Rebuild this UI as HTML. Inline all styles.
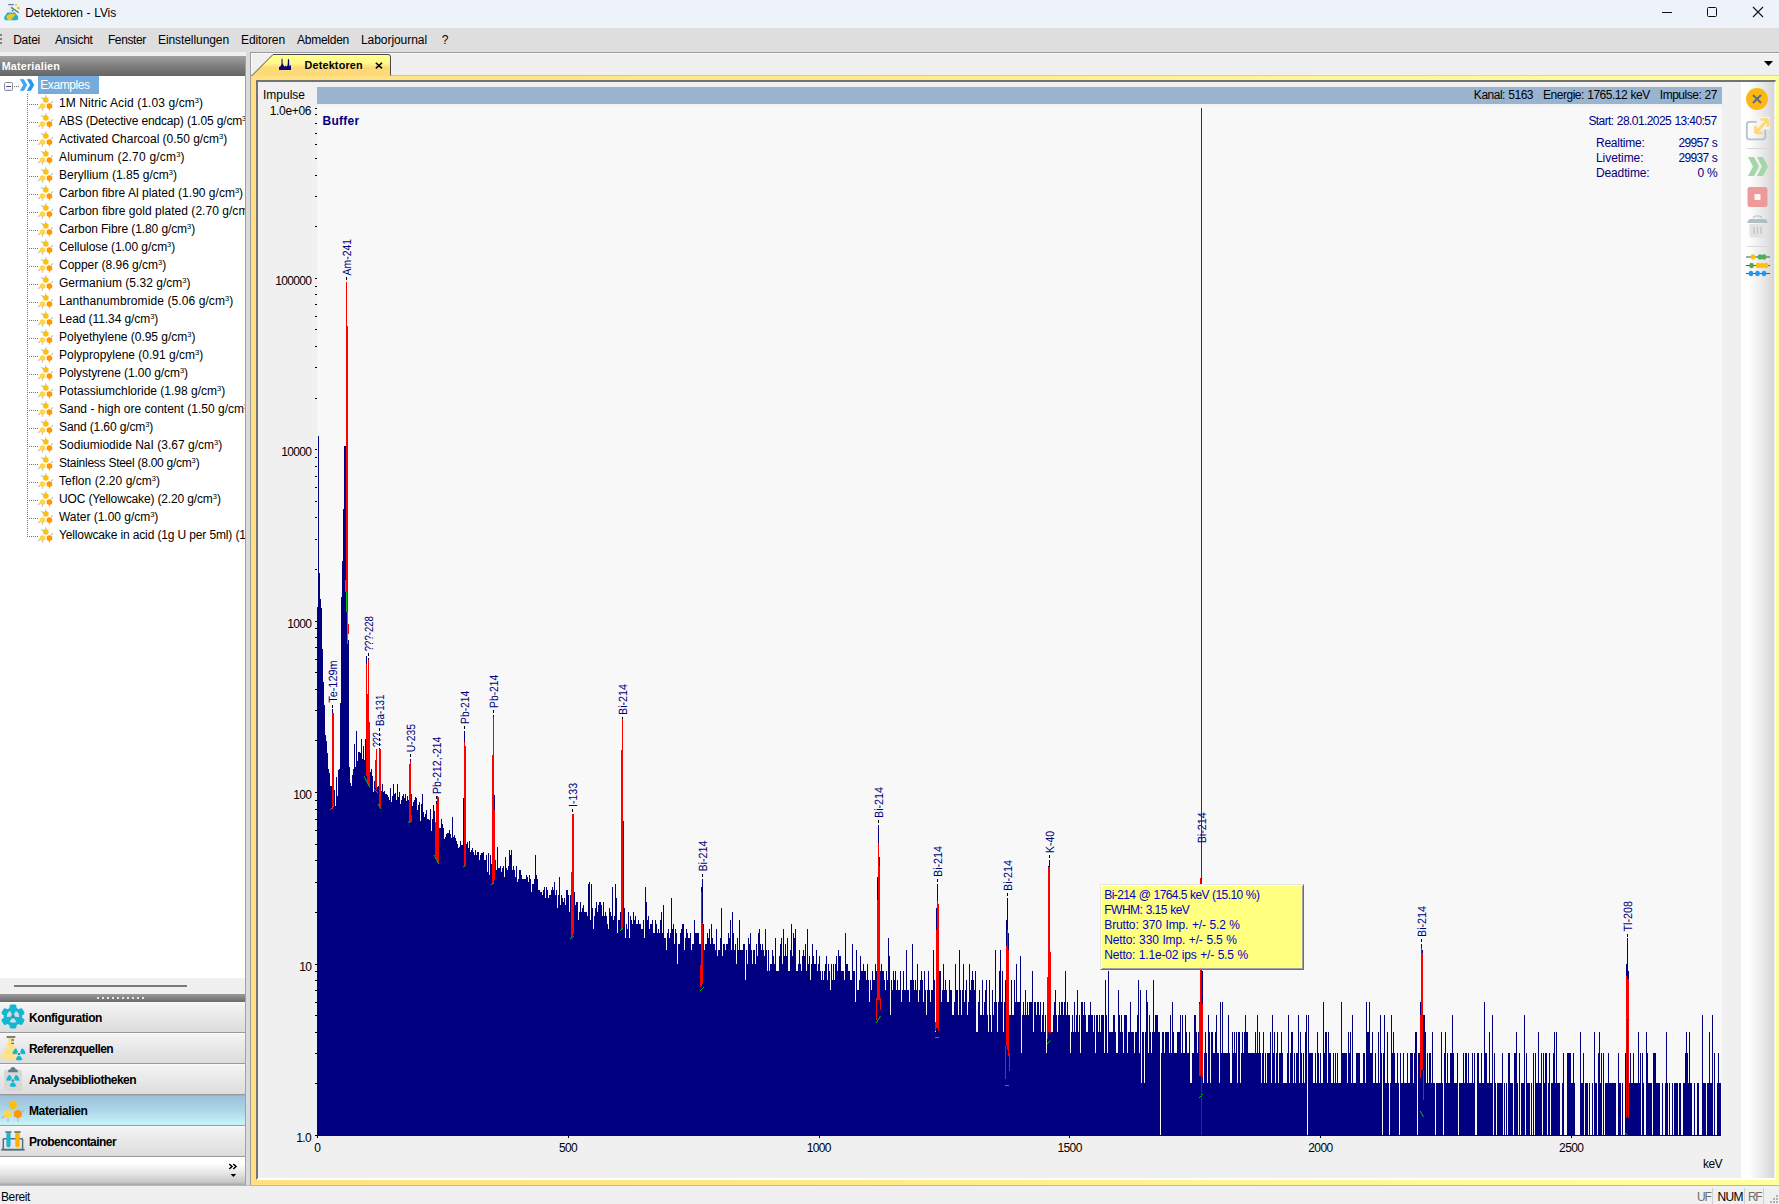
<!DOCTYPE html>
<html lang="de"><head><meta charset="utf-8"><title>Detektoren - LVis</title>
<style>
html,body{margin:0;padding:0;}
body{width:1779px;height:1204px;overflow:hidden;position:relative;background:#f0f0f0;
font-family:"Liberation Sans",sans-serif;font-size:12px;color:#000;}
div{box-sizing:border-box;}
svg{position:absolute;overflow:visible;}
.nav{position:absolute;left:0;width:245px;height:31px;border-top:1px solid #fafafa;border-bottom:1px solid #9a9a9a;
background:linear-gradient(#f4f4f4,#e9e9e9 45%,#dcdcdc);}
</style></head><body>
<div style="position:absolute;left:0px;top:0px;width:1779px;height:28px;background:#eef3fa;"></div><svg style="left:4px;top:4px" width="16" height="16" viewBox="0 0 16 16">
<path d="M5 1.200 H9.300 V6.500 L14 12.500 Q15 16 12 16.200 H2.500 Q-.8 16 .5 12.500 L5 6.500 Z" fill="#e4e9ee"/>
<path d="M3.300 8.500 L11 8.500 L14 12.500 Q15 16 12 16.200 H2.500 Q-.8 16 .5 12.500 Z" fill="#1ab6d4"/>
<path d="M5 10.300 L8 9.800 L11.800 10.400 L6.800 16 L4.200 16 Q1.600 14 3 11.500 Z" fill="#ffc20e"/>
<path d="M4.200 .6 H9.800" stroke="#5b7685" stroke-width="1.100"/>
<path d="M7.200 3.400 L14.800 8.700" stroke="#5b7685" stroke-width="1.300"/>
<path d="M8 6 L9.200 7.400" stroke="#5b7685" stroke-width="1.200"/>
<circle cx="12" cy="1.100" r="1" fill="#ffc20e"/><circle cx="14.400" cy="3.900" r="1.500" fill="#ffc20e"/>
</svg><div style="position:absolute;left:25.3px;top:5.0px;line-height:16px;font-size:12px;color:#000;white-space:pre;letter-spacing:-0.110px;word-spacing:0.50px;">Detektoren - LVis</div><svg style="left:1640px;top:0" width="139" height="30" viewBox="0 0 139 30">
<path d="M22 12.5 H32" stroke="#111" stroke-width="1"/>
<rect x="67.5" y="7.5" width="9" height="9" rx="1" fill="none" stroke="#111" stroke-width="1"/>
<path d="M113 7 L123 17 M123 7 L113 17" stroke="#111" stroke-width="1.1"/>
</svg><div style="position:absolute;left:0px;top:28px;width:1779px;height:24px;background:#dedede;"></div><div style="position:absolute;left:0px;top:52px;width:246px;height:4px;background:#f0f0f0;"></div><div style="position:absolute;left:0px;top:34px;width:2px;height:2px;background:#808080;"></div><div style="position:absolute;left:0px;top:38px;width:2px;height:2px;background:#808080;"></div><div style="position:absolute;left:0px;top:42px;width:2px;height:2px;background:#808080;"></div><div style="position:absolute;left:13.2px;top:32.2px;line-height:16px;font-size:12px;color:#000;white-space:pre;letter-spacing:-0.243px;">Datei</div><div style="position:absolute;left:55.1px;top:32.2px;line-height:16px;font-size:12px;color:#000;white-space:pre;letter-spacing:-0.249px;">Ansicht</div><div style="position:absolute;left:107.9px;top:32.2px;line-height:16px;font-size:12px;color:#000;white-space:pre;letter-spacing:-0.367px;">Fenster</div><div style="position:absolute;left:158.0px;top:32.2px;line-height:16px;font-size:12px;color:#000;white-space:pre;letter-spacing:-0.081px;">Einstellungen</div><div style="position:absolute;left:241.0px;top:32.2px;line-height:16px;font-size:12px;color:#000;white-space:pre;letter-spacing:-0.086px;">Editoren</div><div style="position:absolute;left:297.0px;top:32.2px;line-height:16px;font-size:12px;color:#000;white-space:pre;letter-spacing:-0.254px;">Abmelden</div><div style="position:absolute;left:361.0px;top:32.2px;line-height:16px;font-size:12px;color:#000;white-space:pre;letter-spacing:-0.060px;">Laborjournal</div><div style="position:absolute;left:441.8px;top:32.2px;line-height:16px;font-size:12px;color:#000;white-space:pre;">?</div><div style="position:absolute;left:0px;top:56px;width:245px;height:20px;background:linear-gradient(#a2a2a2,#7e7e7e 50%,#666);"></div><div style="position:absolute;left:1.7px;top:58.1px;line-height:16px;font-size:10.8px;font-weight:bold;color:#fff;white-space:pre;letter-spacing:0.174px;">Materialien</div><div style="position:absolute;left:0px;top:76px;width:245px;height:902px;background:#fff;"></div><div style="position:absolute;left:245px;top:56px;width:1px;height:1129px;background:#a0a0a0;"></div><div style="position:absolute;left:246px;top:52px;width:4px;height:1133px;background:#dcdcdc;"></div><div style="position:absolute;left:4px;top:82px;width:9px;height:9px;border:1px solid #8e8e8e;border-radius:1.5px;background:linear-gradient(#fff 55%,#e4e4e4);"></div><div style="position:absolute;left:6px;top:86px;width:5px;height:1px;background:#3f4fb0;"></div><svg style="left:0;top:0" width="245" height="560"><path d="M14 86.5 H19" stroke="#707070" stroke-width="1" stroke-dasharray="1 1"/><path d="M27.5 94 V537" stroke="#707070" stroke-width="1" stroke-dasharray="1 1"/><path d="M29 104.5 H38" stroke="#707070" stroke-width="1" stroke-dasharray="1 1"/><g transform="translate(38 95)"><path d="M7.8 .3V2.500M3.200 2.200L5.200 4M13 8L15 6.300M2.200 12.200L.2 13.800M4.500 13.800V15.800M11.400 13.800V15.800" stroke="#b4c0c8" stroke-width="1.1"/><path d="M7.80 1.70L10.57 3.30L10.57 6.50L7.80 8.10L5.03 6.50L5.03 3.30z" fill="#ffc107"/><path d="M4.50 7.90L7.27 9.50L7.27 12.70L4.50 14.30L1.73 12.70L1.73 9.50z" fill="#ffd54f"/><path d="M11.40 7.90L14.17 9.50L14.17 12.70L11.40 14.30L8.63 12.70L8.63 9.50z" fill="#ff9800"/></g><path d="M29 122.5 H38" stroke="#707070" stroke-width="1" stroke-dasharray="1 1"/><g transform="translate(38 113)"><path d="M7.8 .3V2.500M3.200 2.200L5.200 4M13 8L15 6.300M2.200 12.200L.2 13.800M4.500 13.800V15.800M11.400 13.800V15.800" stroke="#b4c0c8" stroke-width="1.1"/><path d="M7.80 1.70L10.57 3.30L10.57 6.50L7.80 8.10L5.03 6.50L5.03 3.30z" fill="#ffc107"/><path d="M4.50 7.90L7.27 9.50L7.27 12.70L4.50 14.30L1.73 12.70L1.73 9.50z" fill="#ffd54f"/><path d="M11.40 7.90L14.17 9.50L14.17 12.70L11.40 14.30L8.63 12.70L8.63 9.50z" fill="#ff9800"/></g><path d="M29 140.5 H38" stroke="#707070" stroke-width="1" stroke-dasharray="1 1"/><g transform="translate(38 131)"><path d="M7.8 .3V2.500M3.200 2.200L5.200 4M13 8L15 6.300M2.200 12.200L.2 13.800M4.500 13.800V15.800M11.400 13.800V15.800" stroke="#b4c0c8" stroke-width="1.1"/><path d="M7.80 1.70L10.57 3.30L10.57 6.50L7.80 8.10L5.03 6.50L5.03 3.30z" fill="#ffc107"/><path d="M4.50 7.90L7.27 9.50L7.27 12.70L4.50 14.30L1.73 12.70L1.73 9.50z" fill="#ffd54f"/><path d="M11.40 7.90L14.17 9.50L14.17 12.70L11.40 14.30L8.63 12.70L8.63 9.50z" fill="#ff9800"/></g><path d="M29 158.5 H38" stroke="#707070" stroke-width="1" stroke-dasharray="1 1"/><g transform="translate(38 149)"><path d="M7.8 .3V2.500M3.200 2.200L5.200 4M13 8L15 6.300M2.200 12.200L.2 13.800M4.500 13.800V15.800M11.400 13.800V15.800" stroke="#b4c0c8" stroke-width="1.1"/><path d="M7.80 1.70L10.57 3.30L10.57 6.50L7.80 8.10L5.03 6.50L5.03 3.30z" fill="#ffc107"/><path d="M4.50 7.90L7.27 9.50L7.27 12.70L4.50 14.30L1.73 12.70L1.73 9.50z" fill="#ffd54f"/><path d="M11.40 7.90L14.17 9.50L14.17 12.70L11.40 14.30L8.63 12.70L8.63 9.50z" fill="#ff9800"/></g><path d="M29 176.5 H38" stroke="#707070" stroke-width="1" stroke-dasharray="1 1"/><g transform="translate(38 167)"><path d="M7.8 .3V2.500M3.200 2.200L5.200 4M13 8L15 6.300M2.200 12.200L.2 13.800M4.500 13.800V15.800M11.400 13.800V15.800" stroke="#b4c0c8" stroke-width="1.1"/><path d="M7.80 1.70L10.57 3.30L10.57 6.50L7.80 8.10L5.03 6.50L5.03 3.30z" fill="#ffc107"/><path d="M4.50 7.90L7.27 9.50L7.27 12.70L4.50 14.30L1.73 12.70L1.73 9.50z" fill="#ffd54f"/><path d="M11.40 7.90L14.17 9.50L14.17 12.70L11.40 14.30L8.63 12.70L8.63 9.50z" fill="#ff9800"/></g><path d="M29 194.5 H38" stroke="#707070" stroke-width="1" stroke-dasharray="1 1"/><g transform="translate(38 185)"><path d="M7.8 .3V2.500M3.200 2.200L5.200 4M13 8L15 6.300M2.200 12.200L.2 13.800M4.500 13.800V15.800M11.400 13.800V15.800" stroke="#b4c0c8" stroke-width="1.1"/><path d="M7.80 1.70L10.57 3.30L10.57 6.50L7.80 8.10L5.03 6.50L5.03 3.30z" fill="#ffc107"/><path d="M4.50 7.90L7.27 9.50L7.27 12.70L4.50 14.30L1.73 12.70L1.73 9.50z" fill="#ffd54f"/><path d="M11.40 7.90L14.17 9.50L14.17 12.70L11.40 14.30L8.63 12.70L8.63 9.50z" fill="#ff9800"/></g><path d="M29 212.5 H38" stroke="#707070" stroke-width="1" stroke-dasharray="1 1"/><g transform="translate(38 203)"><path d="M7.8 .3V2.500M3.200 2.200L5.200 4M13 8L15 6.300M2.200 12.200L.2 13.800M4.500 13.800V15.800M11.400 13.800V15.800" stroke="#b4c0c8" stroke-width="1.1"/><path d="M7.80 1.70L10.57 3.30L10.57 6.50L7.80 8.10L5.03 6.50L5.03 3.30z" fill="#ffc107"/><path d="M4.50 7.90L7.27 9.50L7.27 12.70L4.50 14.30L1.73 12.70L1.73 9.50z" fill="#ffd54f"/><path d="M11.40 7.90L14.17 9.50L14.17 12.70L11.40 14.30L8.63 12.70L8.63 9.50z" fill="#ff9800"/></g><path d="M29 230.5 H38" stroke="#707070" stroke-width="1" stroke-dasharray="1 1"/><g transform="translate(38 221)"><path d="M7.8 .3V2.500M3.200 2.200L5.200 4M13 8L15 6.300M2.200 12.200L.2 13.800M4.500 13.800V15.800M11.400 13.800V15.800" stroke="#b4c0c8" stroke-width="1.1"/><path d="M7.80 1.70L10.57 3.30L10.57 6.50L7.80 8.10L5.03 6.50L5.03 3.30z" fill="#ffc107"/><path d="M4.50 7.90L7.27 9.50L7.27 12.70L4.50 14.30L1.73 12.70L1.73 9.50z" fill="#ffd54f"/><path d="M11.40 7.90L14.17 9.50L14.17 12.70L11.40 14.30L8.63 12.70L8.63 9.50z" fill="#ff9800"/></g><path d="M29 248.5 H38" stroke="#707070" stroke-width="1" stroke-dasharray="1 1"/><g transform="translate(38 239)"><path d="M7.8 .3V2.500M3.200 2.200L5.200 4M13 8L15 6.300M2.200 12.200L.2 13.800M4.500 13.800V15.800M11.400 13.800V15.800" stroke="#b4c0c8" stroke-width="1.1"/><path d="M7.80 1.70L10.57 3.30L10.57 6.50L7.80 8.10L5.03 6.50L5.03 3.30z" fill="#ffc107"/><path d="M4.50 7.90L7.27 9.50L7.27 12.70L4.50 14.30L1.73 12.70L1.73 9.50z" fill="#ffd54f"/><path d="M11.40 7.90L14.17 9.50L14.17 12.70L11.40 14.30L8.63 12.70L8.63 9.50z" fill="#ff9800"/></g><path d="M29 266.5 H38" stroke="#707070" stroke-width="1" stroke-dasharray="1 1"/><g transform="translate(38 257)"><path d="M7.8 .3V2.500M3.200 2.200L5.200 4M13 8L15 6.300M2.200 12.200L.2 13.800M4.500 13.800V15.800M11.400 13.800V15.800" stroke="#b4c0c8" stroke-width="1.1"/><path d="M7.80 1.70L10.57 3.30L10.57 6.50L7.80 8.10L5.03 6.50L5.03 3.30z" fill="#ffc107"/><path d="M4.50 7.90L7.27 9.50L7.27 12.70L4.50 14.30L1.73 12.70L1.73 9.50z" fill="#ffd54f"/><path d="M11.40 7.90L14.17 9.50L14.17 12.70L11.40 14.30L8.63 12.70L8.63 9.50z" fill="#ff9800"/></g><path d="M29 284.5 H38" stroke="#707070" stroke-width="1" stroke-dasharray="1 1"/><g transform="translate(38 275)"><path d="M7.8 .3V2.500M3.200 2.200L5.200 4M13 8L15 6.300M2.200 12.200L.2 13.800M4.500 13.800V15.800M11.400 13.800V15.800" stroke="#b4c0c8" stroke-width="1.1"/><path d="M7.80 1.70L10.57 3.30L10.57 6.50L7.80 8.10L5.03 6.50L5.03 3.30z" fill="#ffc107"/><path d="M4.50 7.90L7.27 9.50L7.27 12.70L4.50 14.30L1.73 12.70L1.73 9.50z" fill="#ffd54f"/><path d="M11.40 7.90L14.17 9.50L14.17 12.70L11.40 14.30L8.63 12.70L8.63 9.50z" fill="#ff9800"/></g><path d="M29 302.5 H38" stroke="#707070" stroke-width="1" stroke-dasharray="1 1"/><g transform="translate(38 293)"><path d="M7.8 .3V2.500M3.200 2.200L5.200 4M13 8L15 6.300M2.200 12.200L.2 13.800M4.500 13.800V15.800M11.400 13.800V15.800" stroke="#b4c0c8" stroke-width="1.1"/><path d="M7.80 1.70L10.57 3.30L10.57 6.50L7.80 8.10L5.03 6.50L5.03 3.30z" fill="#ffc107"/><path d="M4.50 7.90L7.27 9.50L7.27 12.70L4.50 14.30L1.73 12.70L1.73 9.50z" fill="#ffd54f"/><path d="M11.40 7.90L14.17 9.50L14.17 12.70L11.40 14.30L8.63 12.70L8.63 9.50z" fill="#ff9800"/></g><path d="M29 320.5 H38" stroke="#707070" stroke-width="1" stroke-dasharray="1 1"/><g transform="translate(38 311)"><path d="M7.8 .3V2.500M3.200 2.200L5.200 4M13 8L15 6.300M2.200 12.200L.2 13.800M4.500 13.800V15.800M11.400 13.800V15.800" stroke="#b4c0c8" stroke-width="1.1"/><path d="M7.80 1.70L10.57 3.30L10.57 6.50L7.80 8.10L5.03 6.50L5.03 3.30z" fill="#ffc107"/><path d="M4.50 7.90L7.27 9.50L7.27 12.70L4.50 14.30L1.73 12.70L1.73 9.50z" fill="#ffd54f"/><path d="M11.40 7.90L14.17 9.50L14.17 12.70L11.40 14.30L8.63 12.70L8.63 9.50z" fill="#ff9800"/></g><path d="M29 338.5 H38" stroke="#707070" stroke-width="1" stroke-dasharray="1 1"/><g transform="translate(38 329)"><path d="M7.8 .3V2.500M3.200 2.200L5.200 4M13 8L15 6.300M2.200 12.200L.2 13.800M4.500 13.800V15.800M11.400 13.800V15.800" stroke="#b4c0c8" stroke-width="1.1"/><path d="M7.80 1.70L10.57 3.30L10.57 6.50L7.80 8.10L5.03 6.50L5.03 3.30z" fill="#ffc107"/><path d="M4.50 7.90L7.27 9.50L7.27 12.70L4.50 14.30L1.73 12.70L1.73 9.50z" fill="#ffd54f"/><path d="M11.40 7.90L14.17 9.50L14.17 12.70L11.40 14.30L8.63 12.70L8.63 9.50z" fill="#ff9800"/></g><path d="M29 356.5 H38" stroke="#707070" stroke-width="1" stroke-dasharray="1 1"/><g transform="translate(38 347)"><path d="M7.8 .3V2.500M3.200 2.200L5.200 4M13 8L15 6.300M2.200 12.200L.2 13.800M4.500 13.800V15.800M11.400 13.800V15.800" stroke="#b4c0c8" stroke-width="1.1"/><path d="M7.80 1.70L10.57 3.30L10.57 6.50L7.80 8.10L5.03 6.50L5.03 3.30z" fill="#ffc107"/><path d="M4.50 7.90L7.27 9.50L7.27 12.70L4.50 14.30L1.73 12.70L1.73 9.50z" fill="#ffd54f"/><path d="M11.40 7.90L14.17 9.50L14.17 12.70L11.40 14.30L8.63 12.70L8.63 9.50z" fill="#ff9800"/></g><path d="M29 374.5 H38" stroke="#707070" stroke-width="1" stroke-dasharray="1 1"/><g transform="translate(38 365)"><path d="M7.8 .3V2.500M3.200 2.200L5.200 4M13 8L15 6.300M2.200 12.200L.2 13.800M4.500 13.800V15.800M11.400 13.800V15.800" stroke="#b4c0c8" stroke-width="1.1"/><path d="M7.80 1.70L10.57 3.30L10.57 6.50L7.80 8.10L5.03 6.50L5.03 3.30z" fill="#ffc107"/><path d="M4.50 7.90L7.27 9.50L7.27 12.70L4.50 14.30L1.73 12.70L1.73 9.50z" fill="#ffd54f"/><path d="M11.40 7.90L14.17 9.50L14.17 12.70L11.40 14.30L8.63 12.70L8.63 9.50z" fill="#ff9800"/></g><path d="M29 392.5 H38" stroke="#707070" stroke-width="1" stroke-dasharray="1 1"/><g transform="translate(38 383)"><path d="M7.8 .3V2.500M3.200 2.200L5.200 4M13 8L15 6.300M2.200 12.200L.2 13.800M4.500 13.800V15.800M11.400 13.800V15.800" stroke="#b4c0c8" stroke-width="1.1"/><path d="M7.80 1.70L10.57 3.30L10.57 6.50L7.80 8.10L5.03 6.50L5.03 3.30z" fill="#ffc107"/><path d="M4.50 7.90L7.27 9.50L7.27 12.70L4.50 14.30L1.73 12.70L1.73 9.50z" fill="#ffd54f"/><path d="M11.40 7.90L14.17 9.50L14.17 12.70L11.40 14.30L8.63 12.70L8.63 9.50z" fill="#ff9800"/></g><path d="M29 410.5 H38" stroke="#707070" stroke-width="1" stroke-dasharray="1 1"/><g transform="translate(38 401)"><path d="M7.8 .3V2.500M3.200 2.200L5.200 4M13 8L15 6.300M2.200 12.200L.2 13.800M4.500 13.800V15.800M11.400 13.800V15.800" stroke="#b4c0c8" stroke-width="1.1"/><path d="M7.80 1.70L10.57 3.30L10.57 6.50L7.80 8.10L5.03 6.50L5.03 3.30z" fill="#ffc107"/><path d="M4.50 7.90L7.27 9.50L7.27 12.70L4.50 14.30L1.73 12.70L1.73 9.50z" fill="#ffd54f"/><path d="M11.40 7.90L14.17 9.50L14.17 12.70L11.40 14.30L8.63 12.70L8.63 9.50z" fill="#ff9800"/></g><path d="M29 428.5 H38" stroke="#707070" stroke-width="1" stroke-dasharray="1 1"/><g transform="translate(38 419)"><path d="M7.8 .3V2.500M3.200 2.200L5.200 4M13 8L15 6.300M2.200 12.200L.2 13.800M4.500 13.800V15.800M11.400 13.800V15.800" stroke="#b4c0c8" stroke-width="1.1"/><path d="M7.80 1.70L10.57 3.30L10.57 6.50L7.80 8.10L5.03 6.50L5.03 3.30z" fill="#ffc107"/><path d="M4.50 7.90L7.27 9.50L7.27 12.70L4.50 14.30L1.73 12.70L1.73 9.50z" fill="#ffd54f"/><path d="M11.40 7.90L14.17 9.50L14.17 12.70L11.40 14.30L8.63 12.70L8.63 9.50z" fill="#ff9800"/></g><path d="M29 446.5 H38" stroke="#707070" stroke-width="1" stroke-dasharray="1 1"/><g transform="translate(38 437)"><path d="M7.8 .3V2.500M3.200 2.200L5.200 4M13 8L15 6.300M2.200 12.200L.2 13.800M4.500 13.800V15.800M11.400 13.800V15.800" stroke="#b4c0c8" stroke-width="1.1"/><path d="M7.80 1.70L10.57 3.30L10.57 6.50L7.80 8.10L5.03 6.50L5.03 3.30z" fill="#ffc107"/><path d="M4.50 7.90L7.27 9.50L7.27 12.70L4.50 14.30L1.73 12.70L1.73 9.50z" fill="#ffd54f"/><path d="M11.40 7.90L14.17 9.50L14.17 12.70L11.40 14.30L8.63 12.70L8.63 9.50z" fill="#ff9800"/></g><path d="M29 464.5 H38" stroke="#707070" stroke-width="1" stroke-dasharray="1 1"/><g transform="translate(38 455)"><path d="M7.8 .3V2.500M3.200 2.200L5.200 4M13 8L15 6.300M2.200 12.200L.2 13.800M4.500 13.800V15.800M11.400 13.800V15.800" stroke="#b4c0c8" stroke-width="1.1"/><path d="M7.80 1.70L10.57 3.30L10.57 6.50L7.80 8.10L5.03 6.50L5.03 3.30z" fill="#ffc107"/><path d="M4.50 7.90L7.27 9.50L7.27 12.70L4.50 14.30L1.73 12.70L1.73 9.50z" fill="#ffd54f"/><path d="M11.40 7.90L14.17 9.50L14.17 12.70L11.40 14.30L8.63 12.70L8.63 9.50z" fill="#ff9800"/></g><path d="M29 482.5 H38" stroke="#707070" stroke-width="1" stroke-dasharray="1 1"/><g transform="translate(38 473)"><path d="M7.8 .3V2.500M3.200 2.200L5.200 4M13 8L15 6.300M2.200 12.200L.2 13.800M4.500 13.800V15.800M11.400 13.800V15.800" stroke="#b4c0c8" stroke-width="1.1"/><path d="M7.80 1.70L10.57 3.30L10.57 6.50L7.80 8.10L5.03 6.50L5.03 3.30z" fill="#ffc107"/><path d="M4.50 7.90L7.27 9.50L7.27 12.70L4.50 14.30L1.73 12.70L1.73 9.50z" fill="#ffd54f"/><path d="M11.40 7.90L14.17 9.50L14.17 12.70L11.40 14.30L8.63 12.70L8.63 9.50z" fill="#ff9800"/></g><path d="M29 500.5 H38" stroke="#707070" stroke-width="1" stroke-dasharray="1 1"/><g transform="translate(38 491)"><path d="M7.8 .3V2.500M3.200 2.200L5.200 4M13 8L15 6.300M2.200 12.200L.2 13.800M4.500 13.800V15.800M11.400 13.800V15.800" stroke="#b4c0c8" stroke-width="1.1"/><path d="M7.80 1.70L10.57 3.30L10.57 6.50L7.80 8.10L5.03 6.50L5.03 3.30z" fill="#ffc107"/><path d="M4.50 7.90L7.27 9.50L7.27 12.70L4.50 14.30L1.73 12.70L1.73 9.50z" fill="#ffd54f"/><path d="M11.40 7.90L14.17 9.50L14.17 12.70L11.40 14.30L8.63 12.70L8.63 9.50z" fill="#ff9800"/></g><path d="M29 518.5 H38" stroke="#707070" stroke-width="1" stroke-dasharray="1 1"/><g transform="translate(38 509)"><path d="M7.8 .3V2.500M3.200 2.200L5.200 4M13 8L15 6.300M2.200 12.200L.2 13.800M4.500 13.800V15.800M11.400 13.800V15.800" stroke="#b4c0c8" stroke-width="1.1"/><path d="M7.80 1.70L10.57 3.30L10.57 6.50L7.80 8.10L5.03 6.50L5.03 3.30z" fill="#ffc107"/><path d="M4.50 7.90L7.27 9.50L7.27 12.70L4.50 14.30L1.73 12.70L1.73 9.50z" fill="#ffd54f"/><path d="M11.40 7.90L14.17 9.50L14.17 12.70L11.40 14.30L8.63 12.70L8.63 9.50z" fill="#ff9800"/></g><path d="M29 536.5 H38" stroke="#707070" stroke-width="1" stroke-dasharray="1 1"/><g transform="translate(38 527)"><path d="M7.8 .3V2.500M3.200 2.200L5.200 4M13 8L15 6.300M2.200 12.200L.2 13.800M4.500 13.800V15.800M11.400 13.800V15.800" stroke="#b4c0c8" stroke-width="1.1"/><path d="M7.80 1.70L10.57 3.30L10.57 6.50L7.80 8.10L5.03 6.50L5.03 3.30z" fill="#ffc107"/><path d="M4.50 7.90L7.27 9.50L7.27 12.70L4.50 14.30L1.73 12.70L1.73 9.50z" fill="#ffd54f"/><path d="M11.40 7.90L14.17 9.50L14.17 12.70L11.40 14.30L8.63 12.70L8.63 9.50z" fill="#ff9800"/></g></svg><div style="position:absolute;left:0;top:76px;width:245px;height:902px;overflow:hidden;"><div style="position:absolute;left:59px;top:19px;line-height:16px;white-space:pre;letter-spacing:0.098px;">1M Nitric Acid (1.03 g/cm<span style="font-size:7.5px;position:relative;top:-4.5px;letter-spacing:0;">3</span>)</div><div style="position:absolute;left:59px;top:37px;line-height:16px;white-space:pre;letter-spacing:-0.152px;">ABS (Detective endcap) (1.05 g/cm<span style="font-size:7.5px;position:relative;top:-4.5px;letter-spacing:0;">3</span>)</div><div style="position:absolute;left:59px;top:55px;line-height:16px;white-space:pre;letter-spacing:-0.024px;">Activated Charcoal (0.50 g/cm<span style="font-size:7.5px;position:relative;top:-4.5px;letter-spacing:0;">3</span>)</div><div style="position:absolute;left:59px;top:73px;line-height:16px;white-space:pre;letter-spacing:0.202px;">Aluminum (2.70 g/cm<span style="font-size:7.5px;position:relative;top:-4.5px;letter-spacing:0;">3</span>)</div><div style="position:absolute;left:59px;top:91px;line-height:16px;white-space:pre;letter-spacing:0.022px;">Beryllium (1.85 g/cm<span style="font-size:7.5px;position:relative;top:-4.5px;letter-spacing:0;">3</span>)</div><div style="position:absolute;left:59px;top:109px;line-height:16px;white-space:pre;letter-spacing:0.015px;">Carbon fibre Al plated (1.90 g/cm<span style="font-size:7.5px;position:relative;top:-4.5px;letter-spacing:0;">3</span>)</div><div style="position:absolute;left:59px;top:127px;line-height:16px;white-space:pre;letter-spacing:0.038px;">Carbon fibre gold plated (2.70 g/cm<span style="font-size:7.5px;position:relative;top:-4.5px;letter-spacing:0;">3</span>)</div><div style="position:absolute;left:59px;top:145px;line-height:16px;white-space:pre;letter-spacing:-0.088px;">Carbon Fibre (1.80 g/cm<span style="font-size:7.5px;position:relative;top:-4.5px;letter-spacing:0;">3</span>)</div><div style="position:absolute;left:59px;top:163px;line-height:16px;white-space:pre;letter-spacing:-0.064px;">Cellulose (1.00 g/cm<span style="font-size:7.5px;position:relative;top:-4.5px;letter-spacing:0;">3</span>)</div><div style="position:absolute;left:59px;top:181px;line-height:16px;white-space:pre;letter-spacing:-0.021px;">Copper (8.96 g/cm<span style="font-size:7.5px;position:relative;top:-4.5px;letter-spacing:0;">3</span>)</div><div style="position:absolute;left:59px;top:199px;line-height:16px;white-space:pre;letter-spacing:0.031px;">Germanium (5.32 g/cm<span style="font-size:7.5px;position:relative;top:-4.5px;letter-spacing:0;">3</span>)</div><div style="position:absolute;left:59px;top:217px;line-height:16px;white-space:pre;letter-spacing:0.097px;">Lanthanumbromide (5.06 g/cm<span style="font-size:7.5px;position:relative;top:-4.5px;letter-spacing:0;">3</span>)</div><div style="position:absolute;left:59px;top:235px;line-height:16px;white-space:pre;letter-spacing:-0.086px;">Lead (11.34 g/cm<span style="font-size:7.5px;position:relative;top:-4.5px;letter-spacing:0;">3</span>)</div><div style="position:absolute;left:59px;top:253px;line-height:16px;white-space:pre;letter-spacing:-0.022px;">Polyethylene (0.95 g/cm<span style="font-size:7.5px;position:relative;top:-4.5px;letter-spacing:0;">3</span>)</div><div style="position:absolute;left:59px;top:271px;line-height:16px;white-space:pre;letter-spacing:-0.002px;">Polypropylene (0.91 g/cm<span style="font-size:7.5px;position:relative;top:-4.5px;letter-spacing:0;">3</span>)</div><div style="position:absolute;left:59px;top:289px;line-height:16px;white-space:pre;letter-spacing:-0.081px;">Polystyrene (1.00 g/cm<span style="font-size:7.5px;position:relative;top:-4.5px;letter-spacing:0;">3</span>)</div><div style="position:absolute;left:59px;top:307px;line-height:16px;white-space:pre;letter-spacing:-0.002px;">Potassiumchloride (1.98 g/cm<span style="font-size:7.5px;position:relative;top:-4.5px;letter-spacing:0;">3</span>)</div><div style="position:absolute;left:59px;top:325px;line-height:16px;white-space:pre;letter-spacing:0.006px;">Sand - high ore content (1.50 g/cm<span style="font-size:7.5px;position:relative;top:-4.5px;letter-spacing:0;">3</span>)</div><div style="position:absolute;left:59px;top:343px;line-height:16px;white-space:pre;letter-spacing:-0.128px;">Sand (1.60 g/cm<span style="font-size:7.5px;position:relative;top:-4.5px;letter-spacing:0;">3</span>)</div><div style="position:absolute;left:59px;top:361px;line-height:16px;white-space:pre;letter-spacing:0.010px;">Sodiumiodide NaI (3.67 g/cm<span style="font-size:7.5px;position:relative;top:-4.5px;letter-spacing:0;">3</span>)</div><div style="position:absolute;left:59px;top:379px;line-height:16px;white-space:pre;letter-spacing:-0.264px;">Stainless Steel (8.00 g/cm<span style="font-size:7.5px;position:relative;top:-4.5px;letter-spacing:0;">3</span>)</div><div style="position:absolute;left:59px;top:397px;line-height:16px;white-space:pre;letter-spacing:0.046px;">Teflon (2.20 g/cm<span style="font-size:7.5px;position:relative;top:-4.5px;letter-spacing:0;">3</span>)</div><div style="position:absolute;left:59px;top:415px;line-height:16px;white-space:pre;letter-spacing:-0.145px;">UOC (Yellowcake) (2.20 g/cm<span style="font-size:7.5px;position:relative;top:-4.5px;letter-spacing:0;">3</span>)</div><div style="position:absolute;left:59px;top:433px;line-height:16px;white-space:pre;letter-spacing:-0.029px;">Water (1.00 g/cm<span style="font-size:7.5px;position:relative;top:-4.5px;letter-spacing:0;">3</span>)</div><div style="position:absolute;left:59px;top:451px;line-height:16px;white-space:pre;letter-spacing:-0.135px;">Yellowcake in acid (1g U per 5ml) (1.05 g/cm<span style="font-size:7.5px;position:relative;top:-4.5px;letter-spacing:0;">3</span>)</div></div><div style="position:absolute;left:38px;top:76px;width:61px;height:18px;background:#76acdc;"></div><svg style="left:19px;top:77px" width="18" height="16" viewBox="0 0 18 16">
<path d="M1.300 2.400h3.400l3.200 5.600-3.200 5.600H1.300l3.200-5.600z" fill="#42a5f5" stroke="#42a5f5" stroke-width=".7" stroke-linejoin="round"/><path d="M8.300 2.400h3.400l3.200 5.600-3.200 5.600H8.300l3.200-5.600z" fill="#2196f3" stroke="#2196f3" stroke-width=".7" stroke-linejoin="round"/></svg><div style="position:absolute;left:40.2px;top:76.7px;line-height:16px;font-size:12px;color:#fff;white-space:pre;letter-spacing:-0.398px;">Examples</div><div style="position:absolute;left:0px;top:978px;width:245px;height:16px;background:#f0f0f0;"></div><div style="position:absolute;left:14px;top:985px;width:173px;height:2px;background:#7a7a7a;"></div><div style="position:absolute;left:0px;top:994px;width:245px;height:8px;background:linear-gradient(#9a9a9a,#6a6a6a);"></div><div style="position:absolute;left:97px;top:997px;width:2px;height:2px;background:#e8e8e8;"></div><div style="position:absolute;left:102px;top:997px;width:2px;height:2px;background:#e8e8e8;"></div><div style="position:absolute;left:107px;top:997px;width:2px;height:2px;background:#e8e8e8;"></div><div style="position:absolute;left:112px;top:997px;width:2px;height:2px;background:#e8e8e8;"></div><div style="position:absolute;left:117px;top:997px;width:2px;height:2px;background:#e8e8e8;"></div><div style="position:absolute;left:122px;top:997px;width:2px;height:2px;background:#e8e8e8;"></div><div style="position:absolute;left:127px;top:997px;width:2px;height:2px;background:#e8e8e8;"></div><div style="position:absolute;left:132px;top:997px;width:2px;height:2px;background:#e8e8e8;"></div><div style="position:absolute;left:137px;top:997px;width:2px;height:2px;background:#e8e8e8;"></div><div style="position:absolute;left:142px;top:997px;width:2px;height:2px;background:#e8e8e8;"></div><div class="nav" style="top:1002px;"></div><div style="position:absolute;left:29.0px;top:1010.0px;line-height:16px;font-size:12px;font-weight:bold;color:#000;white-space:pre;letter-spacing:-0.434px;">Konfiguration</div><div class="nav" style="top:1033px;"></div><div style="position:absolute;left:29.0px;top:1041.0px;line-height:16px;font-size:12px;font-weight:bold;color:#000;white-space:pre;letter-spacing:-0.578px;">Referenzquellen</div><div class="nav" style="top:1064px;"></div><div style="position:absolute;left:29.0px;top:1072.0px;line-height:16px;font-size:12px;font-weight:bold;color:#000;white-space:pre;letter-spacing:-0.508px;">Analysebibliotheken</div><div class="nav" style="top:1095px;background:linear-gradient(#9fc0dc,#a9d4e6 45%,#c9f4f8);border-top:1px solid #8fb2d0;"></div><div style="position:absolute;left:29.0px;top:1103.0px;line-height:16px;font-size:12px;font-weight:bold;color:#000;white-space:pre;letter-spacing:-0.379px;">Materialien</div><div class="nav" style="top:1126px;"></div><div style="position:absolute;left:29.0px;top:1134.0px;line-height:16px;font-size:12px;font-weight:bold;color:#000;white-space:pre;letter-spacing:-0.555px;">Probencontainer</div><svg style="left:0;top:1004px" width="26" height="26" viewBox="0 0 26 26"><g transform="translate(13 12.600)"><rect x="-3.5" y="-12" width="7" height="7" rx="1.8" fill="#12b7d3" transform="rotate(0)"/><rect x="-3.5" y="-12" width="7" height="7" rx="1.8" fill="#12b7d3" transform="rotate(60)"/><rect x="-3.5" y="-12" width="7" height="7" rx="1.8" fill="#12b7d3" transform="rotate(120)"/><rect x="-3.5" y="-12" width="7" height="7" rx="1.8" fill="#12b7d3" transform="rotate(180)"/><rect x="-3.5" y="-12" width="7" height="7" rx="1.8" fill="#12b7d3" transform="rotate(240)"/><rect x="-3.5" y="-12" width="7" height="7" rx="1.8" fill="#12b7d3" transform="rotate(300)"/><circle r="9.300" fill="#12b7d3"/></g><g transform="translate(13 12.6) scale(1.08)"><circle r="1.15" fill="#5f7d8a"/><path d="M-1.02 -1.6 A1.9 1.9 0 0 1 1.02 -1.6 L3.1 -4.8 A5.7 5.7 0 0 0 -3.1 -4.8 Z" fill="#d3dce0" transform="rotate(60)"/><path d="M-1.02 -1.6 A1.9 1.9 0 0 1 1.02 -1.6 L3.1 -4.8 A5.7 5.7 0 0 0 -3.1 -4.8 Z" fill="#d3dce0" transform="rotate(180)"/><path d="M-1.02 -1.6 A1.9 1.9 0 0 1 1.02 -1.6 L3.1 -4.8 A5.7 5.7 0 0 0 -3.1 -4.8 Z" fill="#d3dce0" transform="rotate(300)"/></g></svg><svg style="left:0;top:1035px" width="26" height="28" viewBox="0 0 26 28"><path d="M6.600 2H15.300" stroke="#546e7a" stroke-width="1.7"/><path d="M8 3H14V9.500L19.800 20.500Q21 24 17.500 24H4Q.4 24 1.600 20.500L8 9.500Z" fill="#ffe28c"/><path d="M11.300 5H14M11.300 8.300H14" stroke="#546e7a" stroke-width="1.3"/><g transform="translate(19 19) scale(1.12)"><circle r="1.15" fill="#0f9bb3"/><path d="M-1.02 -1.6 A1.9 1.9 0 0 1 1.02 -1.6 L3.1 -4.8 A5.7 5.7 0 0 0 -3.1 -4.8 Z" fill="#10b8d4" transform="rotate(60)"/><path d="M-1.02 -1.6 A1.9 1.9 0 0 1 1.02 -1.6 L3.1 -4.8 A5.7 5.7 0 0 0 -3.1 -4.8 Z" fill="#10b8d4" transform="rotate(180)"/><path d="M-1.02 -1.6 A1.9 1.9 0 0 1 1.02 -1.6 L3.1 -4.8 A5.7 5.7 0 0 0 -3.1 -4.8 Z" fill="#10b8d4" transform="rotate(300)"/></g></svg><svg style="left:0;top:1066px" width="26" height="28" viewBox="0 0 26 28"><rect x="4" y="3.700" width="18" height="21.500" rx="2.300" fill="#d8d8d8"/><path d="M8 6.300Q8 3.300 10.300 3.200Q10.800 1 13 1Q15.200 1 15.700 3.200Q18 3.300 18 6.300Z" fill="#5f7d8b"/><g transform="translate(12.9 14.5) scale(1.12)"><circle r="1.15" fill="#0f9bb3"/><path d="M-1.02 -1.6 A1.9 1.9 0 0 1 1.02 -1.6 L3.1 -4.8 A5.7 5.7 0 0 0 -3.1 -4.8 Z" fill="#10b8d4" transform="rotate(60)"/><path d="M-1.02 -1.6 A1.9 1.9 0 0 1 1.02 -1.6 L3.1 -4.8 A5.7 5.7 0 0 0 -3.1 -4.8 Z" fill="#10b8d4" transform="rotate(180)"/><path d="M-1.02 -1.6 A1.9 1.9 0 0 1 1.02 -1.6 L3.1 -4.8 A5.7 5.7 0 0 0 -3.1 -4.8 Z" fill="#10b8d4" transform="rotate(300)"/></g></svg><svg style="left:0;top:1097px" width="26" height="28" viewBox="0 0 26 28"><path d="M12.900 1.200V4M6.500 4.500l3 2.500M21.500 15l3-2.200M5 19l-4 2.300M8 21.500V24.500M17.900 21.500V24.500" stroke="#bcbcbc" stroke-width="1.5"/><path d="M12.90 3.50L16.80 5.75L16.80 10.25L12.90 12.50L9.00 10.25L9.00 5.75z" fill="#ffc107"/><path d="M8.00 12.50L11.90 14.75L11.90 19.25L8.00 21.50L4.10 19.25L4.10 14.75z" fill="#ffd54f"/><path d="M17.90 12.50L21.80 14.75L21.80 19.25L17.90 21.50L14.00 19.25L14.00 14.75z" fill="#ff9800"/></svg><svg style="left:0;top:1128px" width="26" height="28" viewBox="0 0 26 28"><path d="M3.300 10.800H22.600M3.300 10.800V21M22.600 10.800V21" fill="none" stroke="#546e7a" stroke-width="1.5"/><path d="M6.400 4.500H10.600V17.300Q10.600 19.400 8.500 19.400Q6.400 19.400 6.400 17.300Z" fill="#19b5d2"/><path d="M15.300 4.500H19.700V17.300Q19.700 19.400 17.500 19.400Q15.300 19.400 15.300 17.300Z" fill="#ffb300"/><path d="M5.300 4H11.400M14.300 4H20.700" stroke="#546e7a" stroke-width="1.7"/><path d="M1.300 21.700H24.600" stroke="#546e7a" stroke-width="1.9"/></svg><div style="position:absolute;left:0px;top:1157px;width:245px;height:28px;background:linear-gradient(#fff 0%,#fff 22%,#e4e4e4 60%,#c6c6c6 90%,#a6a6a6 100%);"></div><svg style="left:226px;top:1161px" width="14" height="20" viewBox="0 0 14 20"><path d="M3.300 3l2.700 2.500L3.300 8M7.300 3l2.700 2.500L7.300 8" fill="none" stroke="#000" stroke-width="1.5"/><path d="M4.600 13h5.600L7.400 16z" fill="#000"/></svg><div style="position:absolute;left:0px;top:1185px;width:1779px;height:1px;background:#b8b8b8;"></div><div style="position:absolute;left:0px;top:1186px;width:1779px;height:18px;background:#f0f0f0;"></div><div style="position:absolute;left:1.0px;top:1189.4px;line-height:16px;font-size:12px;color:#000;white-space:pre;letter-spacing:-0.391px;">Bereit</div><div style="position:absolute;left:1697.0px;top:1189.4px;line-height:16px;font-size:12px;color:#6d6d6d;white-space:pre;letter-spacing:-1.250px;">UF</div><div style="position:absolute;left:1717.5px;top:1189.4px;line-height:16px;font-size:12px;color:#000;white-space:pre;letter-spacing:-0.615px;">NUM</div><div style="position:absolute;left:1748.0px;top:1189.4px;line-height:16px;font-size:12px;color:#6d6d6d;white-space:pre;letter-spacing:-1.500px;">RF</div><div style="position:absolute;left:1712px;top:1188px;width:1px;height:16px;background:#d0d0d0;"></div><div style="position:absolute;left:1744px;top:1188px;width:1px;height:16px;background:#d0d0d0;"></div><div style="position:absolute;left:1763px;top:1188px;width:1px;height:16px;background:#d0d0d0;"></div><div style="position:absolute;left:1776px;top:1201px;width:2px;height:2px;background:#b0b0b0;"></div><div style="position:absolute;left:1773px;top:1201px;width:2px;height:2px;background:#b0b0b0;"></div><div style="position:absolute;left:1770px;top:1201px;width:2px;height:2px;background:#b0b0b0;"></div><div style="position:absolute;left:1776px;top:1198px;width:2px;height:2px;background:#b0b0b0;"></div><div style="position:absolute;left:1773px;top:1198px;width:2px;height:2px;background:#b0b0b0;"></div><div style="position:absolute;left:1776px;top:1195px;width:2px;height:2px;background:#b0b0b0;"></div><div style="position:absolute;left:250px;top:52px;width:1529px;height:1px;background:#9c9c9c;"></div><div style="position:absolute;left:250px;top:52px;width:1px;height:1133px;background:#9c9c9c;"></div><div style="position:absolute;left:251px;top:53px;width:1528px;height:1px;background:#fbfbfb;"></div><div style="position:absolute;left:251px;top:53px;width:1px;height:22px;background:#fbfbfb;"></div><svg style="left:1764px;top:61px" width="10" height="6" viewBox="0 0 10 6"><path d="M0 0H9L4.5 5z" fill="#000"/></svg><div style="position:absolute;left:251px;top:75px;width:1528px;height:1110px;background:linear-gradient(90deg,#ffe184 0%,#ffe888 35%,#fff696 70%,#ffff9e 100%);"></div><div style="position:absolute;left:251px;top:75px;width:1528px;height:1px;background:linear-gradient(90deg,#e8c060,#e8dc78);"></div><svg style="left:250px;top:53px" width="145" height="24" viewBox="0 0 145 24">
<defs><linearGradient id="tg" x1="0" y1="0" x2="0" y2="1"><stop offset="0" stop-color="#ffff8e"/><stop offset=".38" stop-color="#fffa8a"/><stop offset=".6" stop-color="#fdd978"/><stop offset="1" stop-color="#fddb7a"/></linearGradient></defs>
<path d="M1 23.5 L23 1.5 H138 Q140.5 1.5 140.5 4 V23.5 Z" fill="url(#tg)"/>
<path d="M1.5 23 L23 1.5 H138 Q140.5 1.5 140.5 4 V22.5" fill="none" stroke="#4a4a4a" stroke-width="1"/>
<path d="M29 17 V14 L30.500 13.200 L31.100 12 L31.300 6.200 L32 5.500 L32.800 6.200 L33.200 12 L34 13.300 L34.800 13.600 L35.400 12.600 L36 13.600 L37.200 13 L37.700 11.500 L37.900 6.600 L38.500 6 L39.100 6.600 L39.300 12.500 L40 13 L40.500 12 L41 13 V17 Z" fill="#000080"/>
<path d="M31 12 L31.300 6.200 L32 5.500 L32.800 6.200 L33.100 10.500 Z" fill="#ffee88" fill-opacity=".45"/>
<path d="M125.800 9.800 L132 15.400 M132 9.800 L125.800 15.400" stroke="#000" stroke-width="1.5"/>
</svg><div style="position:absolute;left:304.5px;top:57.0px;line-height:16px;font-size:10.8px;font-weight:bold;color:#000;white-space:pre;letter-spacing:0.192px;">Detektoren</div><div style="position:absolute;left:256px;top:80px;width:1519.5px;height:1100px;background:#f0f0f0;border-top:2px solid #737373;border-left:2px solid #737373;border-right:1.5px solid #fff;border-bottom:2px solid #fff;"></div><div style="position:absolute;left:1741px;top:82px;width:33px;height:1096px;background:linear-gradient(90deg,#fff 0%,#fdfdfd 25%,#ececec 60%,#d6d6d6 100%);"></div><svg style="left:1741px;top:82px" width="34" height="210" viewBox="0 0 34 210">
<circle cx="16" cy="17" r="11" fill="#fdb913"/>
<path d="M12 13 L20 21 M20 13 L12 21" stroke="#5b6f7c" stroke-width="2"/>
<rect x="5.800" y="39.800" width="18.500" height="17.500" rx="2.800" fill="none" stroke="#b5c2ca" stroke-width="1.8"/>
<rect x="15.500" y="35" width="13" height="12.500" fill="#f3f3f3"/>
<path d="M26.500 38 L15 50.500 M27 37.500 H19.500 M27 37.500 V45 M14.500 51 H21.500 M14.500 51 V44" stroke="#ffd873" stroke-width="2.6" fill="none"/>
<path d="M6 66.500 H29" stroke="#d8d8d8" stroke-width="1"/>
<path d="M7 75 H13 L18 84.500 L13 94 H7 L12 84.5 Z" fill="#a5d6a7"/>
<path d="M16 75 H22 L27 84.500 L22 94 H16 L21 84.5 Z" fill="#a5d6a7"/>
<rect x="6.500" y="105" width="20" height="20" rx="2.500" fill="#ef9a9a"/>
<rect x="13.500" y="112" width="6" height="6" fill="#fdf3f3"/>
<path d="M12.500 136 Q12.5 134 14.500 134 H18.500 Q20.5 134 20.500 136" fill="none" stroke="#b0bec5" stroke-width="1.2"/>
<path d="M6.500 141 Q6.5 137 10.500 137 H22.500 Q26.5 137 26.500 141 Z" fill="#b0bec5"/>
<path d="M8.500 142 H24.500 V153 Q24.5 155.500 22 155.500 H11 Q8.5 155.5 8.500 153 Z" fill="#e2e2e2"/>
<path d="M13 145 V152 M16.500 145 V152 M20 145 V152" stroke="#bcc6cc" stroke-width="1.3"/>
<path d="M6 164.500 H29" stroke="#d8d8d8" stroke-width="1"/>
<path d="M5 175 H29 M5 183.500 H29 M5 191.500 H29" stroke="#455a64" stroke-width="1.2"/>
<ellipse cx="12" cy="175" rx="2.300" ry="2.800" fill="#ffc107"/><ellipse cx="19" cy="175" rx="2.300" ry="2.800" fill="#4caf50"/><ellipse cx="23" cy="175" rx="2.300" ry="2.800" fill="#4caf50"/>
<ellipse cx="10.500" cy="183.500" rx="2.300" ry="2.800" fill="#4caf50"/><ellipse cx="17" cy="183.500" rx="2.300" ry="2.800" fill="#ffc107"/><ellipse cx="21" cy="183.500" rx="2.300" ry="2.800" fill="#ffc107"/><ellipse cx="25" cy="183.500" rx="2.300" ry="2.800" fill="#ffc107"/>
<ellipse cx="10" cy="191.500" rx="2.300" ry="2.800" fill="#2196f3"/><ellipse cx="16.500" cy="191.500" rx="2.300" ry="2.800" fill="#2196f3"/><ellipse cx="23" cy="191.500" rx="2.300" ry="2.800" fill="#2196f3"/>
</svg><div style="position:absolute;left:317px;top:87px;width:1405px;height:17px;background:#99b4d1;"></div><div style="position:absolute;left:317px;top:104px;width:1405px;height:3px;background:linear-gradient(#f0f0f0,#f6f6f6);"></div><div style="position:absolute;left:317px;top:107px;width:1405px;height:1029px;background:#f8f8f8;"></div><div style="position:absolute;left:263.0px;top:87.0px;line-height:16px;font-size:12px;color:#000;white-space:pre;letter-spacing:-0.002px;">Impulse</div><div style="position:absolute;right:62.0px;top:87.0px;line-height:16px;font-size:12px;color:#000;white-space:pre;letter-spacing:-0.487px;word-spacing:0.50px;">Kanal: 5163   Energie: 1765.12 keV   Impulse: 27</div><div style="position:absolute;left:322.5px;top:112.5px;line-height:16px;font-size:12px;font-weight:bold;color:#000080;white-space:pre;letter-spacing:0.276px;">Buffer</div><div style="position:absolute;right:62.5px;top:113.0px;line-height:16px;font-size:12px;color:#000080;white-space:pre;letter-spacing:-0.578px;word-spacing:0.50px;">Start: 28.01.2025 13:40:57</div><div style="position:absolute;left:1596.0px;top:135.0px;line-height:16px;font-size:12px;color:#000080;white-space:pre;letter-spacing:-0.243px;">Realtime:</div><div style="position:absolute;right:62.0px;top:135.0px;line-height:16px;font-size:12px;color:#000080;white-space:pre;letter-spacing:-0.670px;word-spacing:0.50px;">29957 s</div><div style="position:absolute;left:1596.0px;top:150.0px;line-height:16px;font-size:12px;color:#000080;white-space:pre;letter-spacing:-0.057px;">Livetime:</div><div style="position:absolute;right:62.0px;top:150.0px;line-height:16px;font-size:12px;color:#000080;white-space:pre;letter-spacing:-0.670px;word-spacing:0.50px;">29937 s</div><div style="position:absolute;left:1596.0px;top:165.0px;line-height:16px;font-size:12px;color:#000080;white-space:pre;letter-spacing:-0.132px;">Deadtime:</div><div style="position:absolute;right:62.0px;top:165.0px;line-height:16px;font-size:12px;color:#000080;white-space:pre;letter-spacing:-0.557px;word-spacing:0.50px;">0 %</div><div style="position:absolute;right:1467.8px;top:102.5px;line-height:16px;font-size:12px;color:#000;white-space:pre;letter-spacing:-0.315px;">1.0e+06</div><div style="position:absolute;right:1467.8px;top:272.5px;line-height:16px;font-size:12px;color:#000;white-space:pre;letter-spacing:-0.672px;">100000</div><div style="position:absolute;right:1467.8px;top:443.5px;line-height:16px;font-size:12px;color:#000;white-space:pre;letter-spacing:-0.672px;">10000</div><div style="position:absolute;right:1467.8px;top:615.5px;line-height:16px;font-size:12px;color:#000;white-space:pre;letter-spacing:-0.672px;">1000</div><div style="position:absolute;right:1467.8px;top:786.5px;line-height:16px;font-size:12px;color:#000;white-space:pre;letter-spacing:-0.672px;">100</div><div style="position:absolute;right:1467.8px;top:958.5px;line-height:16px;font-size:12px;color:#000;white-space:pre;letter-spacing:-0.672px;">10</div><div style="position:absolute;right:1467.8px;top:1129.5px;line-height:16px;font-size:12px;color:#000;white-space:pre;letter-spacing:-0.557px;">1.0</div><div style="position:absolute;left:317.2px;transform:translateX(-50%);top:1139.5px;line-height:16px;font-size:12px;color:#000;white-space:pre;letter-spacing:-0.622px;">0</div><div style="position:absolute;left:568.0px;transform:translateX(-50%);top:1139.5px;line-height:16px;font-size:12px;color:#000;white-space:pre;letter-spacing:-0.622px;">500</div><div style="position:absolute;left:818.8px;transform:translateX(-50%);top:1139.5px;line-height:16px;font-size:12px;color:#000;white-space:pre;letter-spacing:-0.622px;">1000</div><div style="position:absolute;left:1069.6px;transform:translateX(-50%);top:1139.5px;line-height:16px;font-size:12px;color:#000;white-space:pre;letter-spacing:-0.622px;">1500</div><div style="position:absolute;left:1320.4px;transform:translateX(-50%);top:1139.5px;line-height:16px;font-size:12px;color:#000;white-space:pre;letter-spacing:-0.622px;">2000</div><div style="position:absolute;left:1571.2px;transform:translateX(-50%);top:1139.5px;line-height:16px;font-size:12px;color:#000;white-space:pre;letter-spacing:-0.622px;">2500</div><div style="position:absolute;right:57.0px;top:1156.0px;line-height:16px;font-size:12px;color:#000;white-space:pre;letter-spacing:-0.557px;">keV</div><svg style="left:0;top:0" width="1779" height="1204" viewBox="0 0 1779 1204" shape-rendering="crispEdges"><path d="M315 1135.5H317M315 1083.5H317M315 1053.5H317M315 1032.5H317M315 1015.5H317M315 1002.5H317M315 990.5H317M315 980.5H317M315 971.5H317M315 964.5H317M315 912.5H317M315 882.5H317M315 860.5H317M315 844.5H317M315 830.5H317M315 819.5H317M315 809.5H317M315 800.5H317M315 792.5H317M315 740.5H317M315 710.5H317M315 689.5H317M315 672.5H317M315 659.5H317M315 647.5H317M315 637.5H317M315 628.5H317M315 621.5H317M315 569.5H317M315 539.5H317M315 517.5H317M315 501.5H317M315 487.5H317M315 476.5H317M315 466.5H317M315 457.5H317M315 449.5H317M315 398.5H317M315 367.5H317M315 346.5H317M315 329.5H317M315 316.5H317M315 304.5H317M315 294.5H317M315 286.5H317M315 278.5H317M315 226.5H317M315 196.5H317M315 175.5H317M315 158.5H317M315 144.5H317M315 133.5H317M315 123.5H317M315 114.5H317M315 108.5H317M317.5 1136V1138M568.5 1136V1138M819.5 1136V1138M1069.5 1136V1138M1320.5 1136V1138M1571.5 1136V1138" stroke="#000" stroke-width="1" fill="none"/><path d="M317.5 607V1136M318.5 436V1136M319.5 573V1136M320.5 599V1136M321.5 608V1136M322.5 649V1136M323.5 682V1136M324.5 705V1136M325.5 735V1136M326.5 741V1136M327.5 753V1136M328.5 769V1136M329.5 773V1136M330.5 786V1136M331.5 786V1136M332.5 709V1136M333.5 726V1136M334.5 790V1136M335.5 806V1136M336.5 777V1136M337.5 796V1136M338.5 770V1136M339.5 769V1136M340.5 703V1136M341.5 597V1136M342.5 561V1136M343.5 509V1136M344.5 446V1136M345.5 446V1136M346.5 446V1136M347.5 446V1136M348.5 640V1136M349.5 767V1136M350.5 783V1136M351.5 786V1136M352.5 775V1136M353.5 769V1136M354.5 744V1136M355.5 767V1136M356.5 731V1136M357.5 761V1136M358.5 752V1136M359.5 752V1136M360.5 753V1136M361.5 739V1136M362.5 759V1136M363.5 746V1136M364.5 760V1136M365.5 739V1136M366.5 656V1136M367.5 741V1136M368.5 658V1136M369.5 747V1136M370.5 772V1136M371.5 769V1136M372.5 776V1136M373.5 792V1136M374.5 781V1136M375.5 784V1136M376.5 749V1136M377.5 787V1136M378.5 786V1136M379.5 749V1136M380.5 749V1136M381.5 791V1136M382.5 784V1136M383.5 792V1136M384.5 791V1136M385.5 794V1136M386.5 794V1136M387.5 795V1136M388.5 797V1136M389.5 800V1136M390.5 788V1136M391.5 802V1136M392.5 796V1136M393.5 784V1136M394.5 794V1136M395.5 793V1136M396.5 800V1136M397.5 784V1136M398.5 797V1136M399.5 792V1136M400.5 804V1136M401.5 800V1136M402.5 796V1136M403.5 794V1136M404.5 798V1136M405.5 794V1136M406.5 801V1136M407.5 796V1136M408.5 800V1136M409.5 793V1136M410.5 759V1136M411.5 794V1136M412.5 806V1136M413.5 802V1136M414.5 800V1136M415.5 797V1136M416.5 798V1136M417.5 810V1136M418.5 805V1136M419.5 802V1136M420.5 821V1136M421.5 804V1136M422.5 794V1136M423.5 812V1136M424.5 817V1136M425.5 814V1136M426.5 810V1136M427.5 819V1136M428.5 819V1136M429.5 820V1136M430.5 809V1136M431.5 831V1136M432.5 819V1136M433.5 805V1136M434.5 811V1136M435.5 828V1136M436.5 801V1136M437.5 796V1136M438.5 797V1136M439.5 828V1136M440.5 828V1136M441.5 819V1136M442.5 824V1136M443.5 828V1136M444.5 839V1136M445.5 837V1136M446.5 834V1136M447.5 833V1136M448.5 833V1136M449.5 830V1136M450.5 834V1136M451.5 838V1136M452.5 817V1136M453.5 837V1136M454.5 835V1136M455.5 838V1136M456.5 841V1136M457.5 844V1136M458.5 848V1136M459.5 847V1136M460.5 841V1136M461.5 845V1136M462.5 845V1136M463.5 798V1136M464.5 731V1136M465.5 799V1136M466.5 844V1136M467.5 842V1136M468.5 848V1136M469.5 841V1136M470.5 852V1136M471.5 850V1136M472.5 848V1136M473.5 852V1136M474.5 855V1136M475.5 850V1136M476.5 855V1136M477.5 852V1136M478.5 852V1136M479.5 860V1136M480.5 855V1136M481.5 853V1136M482.5 853V1136M483.5 852V1136M484.5 860V1136M485.5 860V1136M486.5 855V1136M487.5 872V1136M488.5 853V1136M489.5 875V1136M490.5 855V1136M491.5 864V1136M492.5 795V1136M493.5 715V1136M494.5 795V1136M495.5 860V1136M496.5 870V1136M497.5 847V1136M498.5 868V1136M499.5 868V1136M500.5 866V1136M501.5 872V1136M502.5 868V1136M503.5 866V1136M504.5 877V1136M505.5 857V1136M506.5 868V1136M507.5 870V1136M508.5 866V1136M509.5 850V1136M510.5 855V1136M511.5 850V1136M512.5 870V1136M513.5 866V1136M514.5 870V1136M515.5 877V1136M516.5 866V1136M517.5 882V1136M518.5 879V1136M519.5 870V1136M520.5 870V1136M521.5 875V1136M522.5 879V1136M523.5 879V1136M524.5 879V1136M525.5 879V1136M526.5 875V1136M527.5 877V1136M528.5 882V1136M529.5 875V1136M530.5 879V1136M531.5 892V1136M532.5 884V1136M533.5 884V1136M534.5 879V1136M535.5 855V1136M536.5 875V1136M537.5 879V1136M538.5 890V1136M539.5 890V1136M540.5 892V1136M541.5 892V1136M542.5 895V1136M543.5 890V1136M544.5 887V1136M545.5 898V1136M546.5 887V1136M547.5 890V1136M548.5 898V1136M549.5 895V1136M550.5 895V1136M551.5 890V1136M552.5 887V1136M553.5 890V1136M554.5 882V1136M555.5 895V1136M556.5 890V1136M557.5 908V1136M558.5 895V1136M559.5 877V1136M560.5 905V1136M561.5 895V1136M562.5 898V1136M563.5 902V1136M564.5 898V1136M565.5 905V1136M566.5 890V1136M567.5 890V1136M568.5 895V1136M569.5 912V1136M570.5 895V1136M571.5 892V1136M572.5 814V1136M573.5 814V1136M574.5 892V1136M575.5 905V1136M576.5 902V1136M577.5 902V1136M578.5 920V1136M579.5 912V1136M580.5 902V1136M581.5 912V1136M582.5 908V1136M583.5 905V1136M584.5 912V1136M585.5 912V1136M586.5 912V1136M587.5 916V1136M588.5 884V1136M589.5 882V1136M590.5 920V1136M591.5 884V1136M592.5 908V1136M593.5 929V1136M594.5 916V1136M595.5 908V1136M596.5 902V1136M597.5 912V1136M598.5 905V1136M599.5 902V1136M600.5 902V1136M601.5 905V1136M602.5 916V1136M603.5 902V1136M604.5 916V1136M605.5 912V1136M606.5 916V1136M607.5 924V1136M608.5 929V1136M609.5 908V1136M610.5 912V1136M611.5 916V1136M612.5 887V1136M613.5 920V1136M614.5 916V1136M615.5 884V1136M616.5 898V1136M617.5 933V1136M618.5 920V1136M619.5 920V1136M620.5 912V1136M621.5 750V1136M622.5 719V1136M623.5 821V1136M624.5 908V1136M625.5 938V1136M626.5 924V1136M627.5 929V1136M628.5 912V1136M629.5 938V1136M630.5 916V1136M631.5 920V1136M632.5 924V1136M633.5 912V1136M634.5 920V1136M635.5 916V1136M636.5 924V1136M637.5 924V1136M638.5 920V1136M639.5 924V1136M640.5 924V1136M641.5 929V1136M642.5 929V1136M643.5 920V1136M644.5 938V1136M645.5 887V1136M646.5 902V1136M647.5 920V1136M648.5 916V1136M649.5 929V1136M650.5 924V1136M651.5 924V1136M652.5 920V1136M653.5 933V1136M654.5 933V1136M655.5 920V1136M656.5 924V1136M657.5 933V1136M658.5 929V1136M659.5 933V1136M660.5 920V1136M661.5 912V1136M662.5 933V1136M663.5 905V1136M664.5 938V1136M665.5 938V1136M666.5 950V1136M667.5 933V1136M668.5 929V1136M669.5 938V1136M670.5 933V1136M671.5 898V1136M672.5 929V1136M673.5 924V1136M674.5 944V1136M675.5 929V1136M676.5 933V1136M677.5 964V1136M678.5 944V1136M679.5 944V1136M680.5 933V1136M681.5 929V1136M682.5 924V1136M683.5 924V1136M684.5 950V1136M685.5 938V1136M686.5 929V1136M687.5 933V1136M688.5 938V1136M689.5 938V1136M690.5 933V1136M691.5 950V1136M692.5 944V1136M693.5 944V1136M694.5 920V1136M695.5 933V1136M696.5 933V1136M697.5 933V1136M698.5 933V1136M699.5 944V1136M700.5 944V1136M701.5 887V1136M702.5 879V1136M703.5 924V1136M704.5 950V1136M705.5 944V1136M706.5 944V1136M707.5 933V1136M708.5 938V1136M709.5 929V1136M710.5 944V1136M711.5 924V1136M712.5 938V1136M713.5 944V1136M714.5 944V1136M715.5 950V1136M716.5 929V1136M717.5 956V1136M718.5 950V1136M719.5 950V1136M720.5 938V1136M721.5 908V1136M722.5 956V1136M723.5 944V1136M724.5 944V1136M725.5 950V1136M726.5 944V1136M727.5 944V1136M728.5 933V1136M729.5 938V1136M730.5 920V1136M731.5 950V1136M732.5 912V1136M733.5 933V1136M734.5 950V1136M735.5 944V1136M736.5 964V1136M737.5 938V1136M738.5 950V1136M739.5 920V1136M740.5 950V1136M741.5 950V1136M742.5 950V1136M743.5 944V1136M744.5 944V1136M745.5 980V1136M746.5 950V1136M747.5 964V1136M748.5 938V1136M749.5 944V1136M750.5 933V1136M751.5 950V1136M752.5 964V1136M753.5 950V1136M754.5 950V1136M755.5 964V1136M756.5 944V1136M757.5 956V1136M758.5 933V1136M759.5 929V1136M760.5 944V1136M761.5 950V1136M762.5 944V1136M763.5 950V1136M764.5 956V1136M765.5 929V1136M766.5 950V1136M767.5 971V1136M768.5 950V1136M769.5 971V1136M770.5 964V1136M771.5 964V1136M772.5 950V1136M773.5 956V1136M774.5 964V1136M775.5 938V1136M776.5 971V1136M777.5 971V1136M778.5 971V1136M779.5 956V1136M780.5 944V1136M781.5 938V1136M782.5 964V1136M783.5 929V1136M784.5 956V1136M785.5 944V1136M786.5 956V1136M787.5 938V1136M788.5 971V1136M789.5 971V1136M790.5 950V1136M791.5 924V1136M792.5 956V1136M793.5 933V1136M794.5 938V1136M795.5 929V1136M796.5 971V1136M797.5 971V1136M798.5 964V1136M799.5 950V1136M800.5 964V1136M801.5 971V1136M802.5 956V1136M803.5 950V1136M804.5 956V1136M805.5 944V1136M806.5 971V1136M807.5 929V1136M808.5 964V1136M809.5 956V1136M810.5 980V1136M811.5 964V1136M812.5 944V1136M813.5 956V1136M814.5 964V1136M815.5 964V1136M816.5 950V1136M817.5 971V1136M818.5 964V1136M819.5 956V1136M820.5 971V1136M821.5 980V1136M822.5 971V1136M823.5 980V1136M824.5 971V1136M825.5 964V1136M826.5 956V1136M827.5 980V1136M828.5 964V1136M829.5 971V1136M830.5 990V1136M831.5 964V1136M832.5 980V1136M833.5 964V1136M834.5 980V1136M835.5 964V1136M836.5 956V1136M837.5 971V1136M838.5 950V1136M839.5 956V1136M840.5 956V1136M841.5 971V1136M842.5 971V1136M843.5 971V1136M844.5 980V1136M845.5 933V1136M846.5 964V1136M847.5 964V1136M848.5 971V1136M849.5 971V1136M850.5 980V1136M851.5 980V1136M852.5 944V1136M853.5 971V1136M854.5 971V1136M855.5 1002V1136M856.5 950V1136M857.5 990V1136M858.5 990V1136M859.5 980V1136M860.5 956V1136M861.5 971V1136M862.5 971V1136M863.5 964V1136M864.5 971V1136M865.5 971V1136M866.5 980V1136M867.5 964V1136M868.5 980V1136M869.5 1002V1136M870.5 980V1136M871.5 990V1136M872.5 971V1136M873.5 980V1136M874.5 980V1136M875.5 964V1136M876.5 971V1136M877.5 877V1136M878.5 825V1136M879.5 857V1136M880.5 971V1136M881.5 964V1136M882.5 971V1136M883.5 971V1136M884.5 980V1136M885.5 990V1136M886.5 971V1136M887.5 980V1136M888.5 938V1136M889.5 956V1136M890.5 1015V1136M891.5 980V1136M892.5 990V1136M893.5 971V1136M894.5 980V1136M895.5 971V1136M896.5 990V1136M897.5 980V1136M898.5 990V1136M899.5 990V1136M900.5 971V1136M901.5 1002V1136M902.5 990V1136M903.5 971V1136M904.5 990V1136M905.5 990V1136M906.5 950V1136M907.5 990V1136M908.5 990V1136M909.5 1002V1136M910.5 980V1136M911.5 980V1136M912.5 944V1136M913.5 980V1136M914.5 990V1136M915.5 980V1136M916.5 990V1136M917.5 964V1136M918.5 1002V1136M919.5 990V1136M920.5 980V1136M921.5 971V1136M922.5 980V1136M923.5 1002V1136M924.5 971V1136M925.5 990V1136M926.5 1015V1136M927.5 990V1136M928.5 971V1136M929.5 990V1136M930.5 1002V1136M931.5 990V1136M932.5 990V1136M933.5 950V1136M934.5 980V1136M935.5 1032V1136M936.5 908V1136M937.5 884V1136M938.5 944V1136M939.5 971V1136M940.5 971V1136M941.5 1002V1136M942.5 990V1136M943.5 964V1136M944.5 990V1136M945.5 980V1136M946.5 990V1136M947.5 1002V1136M948.5 1002V1136M949.5 980V1136M950.5 990V1136M951.5 990V1136M952.5 1015V1136M953.5 1015V1136M954.5 1002V1136M955.5 964V1136M956.5 990V1136M957.5 990V1136M958.5 1015V1136M959.5 950V1136M960.5 990V1136M961.5 1015V1136M962.5 990V1136M963.5 964V1136M964.5 1002V1136M965.5 990V1136M966.5 980V1136M967.5 1015V1136M968.5 1002V1136M969.5 964V1136M970.5 990V1136M971.5 980V1136M972.5 971V1136M973.5 980V1136M974.5 990V1136M975.5 971V1136M976.5 1032V1136M977.5 1032V1136M978.5 1002V1136M979.5 990V1136M980.5 1015V1136M981.5 1015V1136M982.5 980V1136M983.5 1015V1136M984.5 1002V1136M985.5 990V1136M986.5 980V1136M987.5 1015V1136M988.5 1032V1136M989.5 980V1136M990.5 1015V1136M991.5 1032V1136M992.5 990V1136M993.5 1015V1136M994.5 1002V1136M995.5 950V1136M996.5 1002V1136M997.5 1032V1136M998.5 1002V1136M999.5 971V1136M1000.5 950V1136M1001.5 1002V1136M1002.5 971V1136M1003.5 1032V1136M1004.5 1002V1136M1005.5 980V1136M1006.5 920V1136M1007.5 898V1136M1008.5 933V1136M1009.5 1015V1136M1010.5 1015V1136M1011.5 980V1136M1012.5 1015V1136M1013.5 1015V1136M1014.5 980V1136M1015.5 1002V1136M1016.5 964V1136M1017.5 1002V1136M1018.5 1002V1136M1019.5 1002V1136M1020.5 956V1136M1021.5 1053V1136M1022.5 1015V1136M1023.5 1002V1136M1024.5 1015V1136M1025.5 990V1136M1026.5 1015V1136M1027.5 1002V1136M1028.5 1015V1136M1029.5 1002V1136M1030.5 1002V1136M1031.5 1002V1136M1032.5 971V1136M1033.5 1032V1136M1034.5 1002V1136M1035.5 1002V1136M1036.5 1015V1136M1037.5 1002V1136M1038.5 1002V1136M1039.5 1015V1136M1040.5 1002V1136M1041.5 1032V1136M1042.5 1015V1136M1043.5 1002V1136M1044.5 1032V1136M1045.5 1015V1136M1046.5 1053V1136M1047.5 990V1136M1048.5 866V1136M1049.5 860V1136M1050.5 964V1136M1051.5 1032V1136M1052.5 1032V1136M1053.5 1015V1136M1054.5 1002V1136M1055.5 990V1136M1056.5 1015V1136M1057.5 1032V1136M1058.5 1015V1136M1059.5 1002V1136M1060.5 1015V1136M1061.5 1002V1136M1062.5 1002V1136M1063.5 1015V1136M1064.5 1002V1136M1065.5 971V1136M1066.5 1015V1136M1067.5 1002V1136M1068.5 1015V1136M1069.5 1015V1136M1070.5 1053V1136M1071.5 1032V1136M1072.5 1015V1136M1073.5 1032V1136M1074.5 1002V1136M1075.5 1032V1136M1076.5 1015V1136M1077.5 990V1136M1078.5 1032V1136M1079.5 1015V1136M1080.5 1053V1136M1081.5 1002V1136M1082.5 1002V1136M1083.5 1015V1136M1084.5 1002V1136M1085.5 1015V1136M1086.5 1032V1136M1087.5 1032V1136M1088.5 1015V1136M1089.5 1015V1136M1090.5 1002V1136M1091.5 1015V1136M1092.5 1015V1136M1093.5 1032V1136M1094.5 1015V1136M1095.5 1053V1136M1096.5 1015V1136M1097.5 1015V1136M1098.5 1032V1136M1099.5 1015V1136M1100.5 1032V1136M1101.5 1015V1136M1102.5 1015V1136M1103.5 1015V1136M1104.5 1053V1136M1105.5 980V1136M1106.5 1015V1136M1107.5 1053V1136M1108.5 971V1136M1109.5 1032V1136M1110.5 1032V1136M1111.5 1032V1136M1112.5 1032V1136M1113.5 1015V1136M1114.5 1015V1136M1115.5 1032V1136M1116.5 1053V1136M1117.5 1053V1136M1118.5 990V1136M1119.5 1015V1136M1120.5 1032V1136M1121.5 1015V1136M1122.5 1032V1136M1123.5 1053V1136M1124.5 1015V1136M1125.5 1015V1136M1126.5 1015V1136M1127.5 1053V1136M1128.5 1032V1136M1129.5 1032V1136M1130.5 1002V1136M1131.5 1032V1136M1132.5 1032V1136M1133.5 1032V1136M1134.5 1053V1136M1135.5 1032V1136M1136.5 1032V1136M1137.5 1015V1136M1138.5 980V1136M1139.5 1053V1136M1140.5 990V1136M1141.5 1083V1136M1142.5 1032V1136M1143.5 1032V1136M1144.5 1083V1136M1145.5 1032V1136M1146.5 990V1136M1147.5 1002V1136M1148.5 1053V1136M1149.5 1015V1136M1150.5 1032V1136M1151.5 1053V1136M1152.5 1032V1136M1153.5 980V1136M1154.5 1032V1136M1155.5 1015V1136M1156.5 1015V1136M1157.5 1015V1136M1158.5 1032V1136M1159.5 1032V1136M1161.5 1053V1136M1162.5 1032V1136M1163.5 1032V1136M1164.5 1053V1136M1165.5 1032V1136M1166.5 1032V1136M1167.5 1032V1136M1168.5 1032V1136M1169.5 1053V1136M1170.5 1015V1136M1171.5 1053V1136M1172.5 1002V1136M1173.5 1032V1136M1174.5 1053V1136M1175.5 1053V1136M1176.5 1053V1136M1177.5 1032V1136M1178.5 1032V1136M1179.5 1032V1136M1180.5 1015V1136M1181.5 1053V1136M1182.5 1015V1136M1183.5 1053V1136M1184.5 1053V1136M1185.5 1015V1136M1186.5 1032V1136M1187.5 1053V1136M1188.5 1053V1136M1189.5 1032V1136M1190.5 1083V1136M1191.5 1083V1136M1192.5 1053V1136M1193.5 1053V1136M1194.5 1015V1136M1195.5 1015V1136M1196.5 1032V1136M1197.5 1053V1136M1198.5 1032V1136M1199.5 1002V1136M1200.5 964V1136M1201.5 956V1136M1202.5 971V1136M1203.5 1083V1136M1204.5 1053V1136M1205.5 1032V1136M1206.5 1053V1136M1207.5 1083V1136M1208.5 1015V1136M1209.5 1032V1136M1210.5 1083V1136M1211.5 1032V1136M1212.5 1032V1136M1213.5 1053V1136M1214.5 1053V1136M1215.5 1032V1136M1216.5 1015V1136M1217.5 1053V1136M1218.5 1053V1136M1219.5 1083V1136M1220.5 1002V1136M1221.5 1053V1136M1222.5 1002V1136M1223.5 1053V1136M1224.5 1053V1136M1225.5 1053V1136M1226.5 1053V1136M1227.5 1053V1136M1228.5 1015V1136M1229.5 1053V1136M1230.5 1083V1136M1231.5 1083V1136M1232.5 1032V1136M1233.5 1053V1136M1234.5 1032V1136M1235.5 1053V1136M1236.5 1032V1136M1237.5 1083V1136M1238.5 1032V1136M1239.5 1032V1136M1240.5 1083V1136M1241.5 1053V1136M1242.5 1032V1136M1243.5 1053V1136M1244.5 1032V1136M1245.5 1015V1136M1246.5 1032V1136M1247.5 1032V1136M1248.5 1053V1136M1249.5 1053V1136M1250.5 1053V1136M1251.5 1053V1136M1252.5 1053V1136M1253.5 1053V1136M1254.5 1053V1136M1255.5 1032V1136M1256.5 1053V1136M1257.5 1015V1136M1258.5 1053V1136M1259.5 1032V1136M1260.5 1053V1136M1261.5 1083V1136M1262.5 1053V1136M1263.5 1032V1136M1264.5 1083V1136M1265.5 1053V1136M1266.5 1083V1136M1267.5 1053V1136M1268.5 1053V1136M1269.5 1053V1136M1270.5 1032V1136M1271.5 1083V1136M1272.5 1015V1136M1273.5 1053V1136M1274.5 1032V1136M1275.5 1083V1136M1276.5 1053V1136M1277.5 1032V1136M1278.5 1083V1136M1279.5 1053V1136M1280.5 1053V1136M1281.5 1032V1136M1282.5 1053V1136M1283.5 1083V1136M1284.5 1083V1136M1285.5 1083V1136M1286.5 1083V1136M1287.5 1053V1136M1288.5 1015V1136M1289.5 1083V1136M1290.5 1053V1136M1291.5 1032V1136M1292.5 1032V1136M1293.5 1083V1136M1294.5 1053V1136M1295.5 1083V1136M1296.5 1053V1136M1297.5 1053V1136M1298.5 1015V1136M1299.5 1083V1136M1300.5 1032V1136M1301.5 1053V1136M1302.5 1083V1136M1303.5 1053V1136M1304.5 1083V1136M1305.5 1032V1136M1306.5 1015V1136M1308.5 1015V1136M1309.5 1053V1136M1310.5 1053V1136M1311.5 1053V1136M1312.5 1053V1136M1313.5 1083V1136M1314.5 1083V1136M1315.5 1053V1136M1316.5 1083V1136M1317.5 1032V1136M1318.5 1053V1136M1319.5 1083V1136M1320.5 1053V1136M1321.5 1083V1136M1322.5 1083V1136M1323.5 1002V1136M1324.5 1053V1136M1325.5 1032V1136M1326.5 1032V1136M1327.5 1083V1136M1328.5 1032V1136M1329.5 1053V1136M1330.5 1053V1136M1331.5 1083V1136M1332.5 1083V1136M1333.5 1053V1136M1334.5 1083V1136M1335.5 1053V1136M1336.5 1083V1136M1337.5 1053V1136M1338.5 1083V1136M1339.5 1083V1136M1340.5 1083V1136M1341.5 1002V1136M1342.5 1053V1136M1343.5 1053V1136M1344.5 1053V1136M1345.5 1053V1136M1346.5 1053V1136M1347.5 1083V1136M1348.5 1032V1136M1349.5 1053V1136M1350.5 1032V1136M1351.5 1083V1136M1352.5 1015V1136M1353.5 1083V1136M1354.5 1083V1136M1355.5 1083V1136M1356.5 1053V1136M1357.5 1053V1136M1358.5 1053V1136M1359.5 1053V1136M1360.5 1083V1136M1361.5 1083V1136M1362.5 1083V1136M1363.5 1053V1136M1364.5 1053V1136M1365.5 1083V1136M1366.5 1002V1136M1367.5 1032V1136M1368.5 1032V1136M1369.5 1002V1136M1370.5 1053V1136M1371.5 1053V1136M1372.5 1032V1136M1373.5 1083V1136M1374.5 1083V1136M1375.5 1053V1136M1376.5 1083V1136M1377.5 1083V1136M1378.5 1032V1136M1379.5 1083V1136M1380.5 1015V1136M1381.5 1053V1136M1383.5 1053V1136M1384.5 1015V1136M1385.5 1083V1136M1386.5 1083V1136M1387.5 1032V1136M1388.5 1083V1136M1390.5 1083V1136M1391.5 1015V1136M1392.5 1053V1136M1393.5 1032V1136M1394.5 1053V1136M1395.5 1083V1136M1396.5 1083V1136M1397.5 1053V1136M1398.5 1083V1136M1400.5 1053V1136M1401.5 1083V1136M1402.5 1083V1136M1403.5 1053V1136M1404.5 1083V1136M1405.5 1083V1136M1406.5 1083V1136M1407.5 1053V1136M1408.5 1083V1136M1409.5 1083V1136M1410.5 1053V1136M1411.5 1053V1136M1412.5 1053V1136M1413.5 1083V1136M1414.5 1053V1136M1415.5 1032V1136M1416.5 1032V1136M1418.5 1053V1136M1419.5 1053V1136M1420.5 1002V1136M1421.5 944V1136M1422.5 950V1136M1423.5 1015V1136M1424.5 1015V1136M1425.5 1032V1136M1426.5 1083V1136M1427.5 1053V1136M1428.5 1083V1136M1429.5 1053V1136M1430.5 1053V1136M1431.5 1083V1136M1432.5 1032V1136M1433.5 1083V1136M1434.5 1083V1136M1436.5 1083V1136M1437.5 1083V1136M1438.5 1083V1136M1439.5 1083V1136M1440.5 1083V1136M1441.5 1032V1136M1442.5 1083V1136M1444.5 1053V1136M1445.5 1032V1136M1446.5 1083V1136M1447.5 1053V1136M1448.5 1083V1136M1449.5 1083V1136M1450.5 1053V1136M1451.5 1053V1136M1452.5 1015V1136M1453.5 1053V1136M1454.5 1083V1136M1455.5 1083V1136M1456.5 1083V1136M1457.5 1053V1136M1459.5 1083V1136M1460.5 1083V1136M1461.5 1083V1136M1462.5 1083V1136M1463.5 1053V1136M1464.5 1083V1136M1465.5 1053V1136M1466.5 1053V1136M1467.5 1083V1136M1468.5 1053V1136M1469.5 1083V1136M1470.5 1083V1136M1471.5 1083V1136M1472.5 1053V1136M1473.5 1083V1136M1474.5 1053V1136M1477.5 1053V1136M1478.5 1053V1136M1479.5 1083V1136M1480.5 1083V1136M1481.5 1053V1136M1482.5 1083V1136M1483.5 1083V1136M1484.5 1002V1136M1485.5 1053V1136M1486.5 1053V1136M1487.5 1083V1136M1488.5 1083V1136M1489.5 1032V1136M1490.5 1083V1136M1491.5 1083V1136M1492.5 1015V1136M1494.5 1053V1136M1495.5 1083V1136M1497.5 1083V1136M1498.5 1083V1136M1499.5 1083V1136M1500.5 1083V1136M1501.5 1083V1136M1502.5 1053V1136M1504.5 1083V1136M1506.5 1083V1136M1508.5 1053V1136M1509.5 1053V1136M1510.5 1083V1136M1511.5 1083V1136M1512.5 1083V1136M1514.5 1053V1136M1515.5 1053V1136M1516.5 1032V1136M1517.5 1083V1136M1519.5 1053V1136M1521.5 1083V1136M1522.5 1083V1136M1523.5 1083V1136M1524.5 1015V1136M1526.5 1053V1136M1527.5 1083V1136M1528.5 1083V1136M1529.5 1083V1136M1531.5 1083V1136M1533.5 1053V1136M1535.5 1053V1136M1536.5 1083V1136M1537.5 1083V1136M1538.5 1032V1136M1539.5 1083V1136M1540.5 1083V1136M1541.5 1053V1136M1543.5 1053V1136M1544.5 1083V1136M1545.5 1053V1136M1546.5 1053V1136M1548.5 1083V1136M1549.5 1053V1136M1551.5 1083V1136M1552.5 1083V1136M1553.5 1053V1136M1554.5 1032V1136M1555.5 1083V1136M1556.5 1032V1136M1557.5 1083V1136M1558.5 1083V1136M1559.5 1083V1136M1562.5 1083V1136M1563.5 1053V1136M1567.5 1053V1136M1568.5 1053V1136M1569.5 1053V1136M1570.5 1053V1136M1571.5 1083V1136M1572.5 1083V1136M1573.5 1053V1136M1574.5 1083V1136M1580.5 1032V1136M1581.5 1083V1136M1582.5 1083V1136M1583.5 1053V1136M1585.5 1083V1136M1586.5 1083V1136M1587.5 1083V1136M1589.5 1083V1136M1592.5 1083V1136M1594.5 1032V1136M1595.5 1083V1136M1596.5 1083V1136M1598.5 1053V1136M1599.5 1032V1136M1600.5 1083V1136M1601.5 1053V1136M1603.5 1053V1136M1605.5 1083V1136M1606.5 1083V1136M1607.5 1083V1136M1608.5 1053V1136M1609.5 1083V1136M1610.5 1083V1136M1611.5 1083V1136M1612.5 1083V1136M1613.5 1083V1136M1614.5 1083V1136M1615.5 1083V1136M1618.5 1053V1136M1619.5 1083V1136M1620.5 1083V1136M1622.5 1083V1136M1625.5 1053V1136M1626.5 964V1136M1627.5 938V1136M1628.5 971V1136M1629.5 1083V1136M1630.5 1053V1136M1631.5 1083V1136M1632.5 1083V1136M1633.5 1053V1136M1634.5 1083V1136M1635.5 1083V1136M1636.5 1083V1136M1637.5 1083V1136M1638.5 1032V1136M1639.5 1083V1136M1640.5 1053V1136M1642.5 1053V1136M1643.5 1083V1136M1646.5 1032V1136M1647.5 1053V1136M1648.5 1083V1136M1649.5 1083V1136M1650.5 1083V1136M1651.5 1083V1136M1653.5 1053V1136M1654.5 1053V1136M1655.5 1053V1136M1656.5 1083V1136M1657.5 1083V1136M1658.5 1083V1136M1659.5 1083V1136M1662.5 1083V1136M1665.5 1083V1136M1666.5 1032V1136M1667.5 1083V1136M1669.5 1083V1136M1672.5 1083V1136M1674.5 1083V1136M1675.5 1083V1136M1676.5 1083V1136M1677.5 1083V1136M1679.5 1083V1136M1680.5 1083V1136M1683.5 1083V1136M1684.5 1083V1136M1685.5 1053V1136M1686.5 1032V1136M1687.5 1053V1136M1688.5 1083V1136M1689.5 1032V1136M1690.5 1083V1136M1691.5 1083V1136M1694.5 1083V1136M1697.5 1083V1136M1698.5 1083V1136M1702.5 1015V1136M1703.5 1083V1136M1704.5 1083V1136M1705.5 1083V1136M1707.5 1083V1136M1708.5 1083V1136M1709.5 1032V1136M1710.5 1083V1136M1711.5 1083V1136M1712.5 1015V1136M1714.5 1053V1136M1717.5 1083V1136M1718.5 1053V1136M1719.5 1083V1136M1720.5 1083V1136" stroke="#000080" stroke-width="1" fill="none"/><path d="M317 1135.5H1721" stroke="#000080" stroke-width="1"/><path d="M332.5 713V809M333.5 713V806M346.5 282V592M347.5 326V612M348.5 624V634M366.5 664V776M367.5 694V782M368.5 660V786M369.5 722V788M375.5 760V788M376.5 749V790M379.5 749V806M380.5 749V808M410.5 761V822M409.5 764V822M411.5 815V822M435.5 822V856M436.5 804V860M437.5 796V863M438.5 797V864M464.5 742V866M465.5 746V866M493.5 717V884M492.5 755V884M494.5 810V880M572.5 814V936M573.5 814V934M571.5 872V938M622.5 719V930M621.5 750V930M700.5 965V987M701.5 892V987M702.5 923V984M876.5 998V1020M877.5 900V1000M878.5 843V1000M879.5 866V1000M880.5 998V1010M935.5 1022V1031M936.5 930V1028M937.5 901V1028M938.5 904V1031M1005.5 1046V1079M1006.5 946V1046M1007.5 930V1050M1008.5 950V1056M1009.5 1053V1071M1047.5 977V1039M1048.5 867V1032M1049.5 867V1032M1050.5 952V1033M1420.5 1015V1078M1421.5 948V1070M1422.5 953V1070M1423.5 1070V1100M1626.5 976V1118M1627.5 979V1019M1628.5 979V1118M1199.5 1004V1076M1200.5 878V1076M1201.5 880V1076M1202.5 1004V1077" stroke="#ff0000" stroke-width="1" fill="none"/><path d="M330 810L334 806M345.5 580L345.5 592M346.5 592L346.5 612M347.5 612L347.5 644M364 776L369 786M374 789L378 793M378 804L381 809M408 822L411 822M434 855L439 864M463 867L465 866M491 885L494 883M570 939L574 936M620 931L623 928M700 991L704 987M876 1023L880.5 1016M935 1037.5L939 1037.5M1005 1085.5L1009 1085.5M1047 1044L1050.5 1040.5M1420.3 1111L1423.5 1117M1625.3 1132.7L1627.7 1135.2M1199 1098L1203 1094" stroke="#00c000" stroke-width="1" fill="none" shape-rendering="auto"/><path d="M332.5 705V709M346.5 277V282M368.5 653V658M379.5 728V749M410.5 754V759M436.5 796V800M464.5 726V731M493.5 710V716M572.5 809V813M622.5 717V719M702.5 874V878M878.5 820V825M937.5 879V883M1007.5 893V897M1049.5 855V860M1421.5 939V943M1627.5 934V938" stroke="#000" stroke-width="1" stroke-dasharray="3 2" fill="none"/><path d="M1201.5 108V1135" stroke="#b40000" stroke-width="1"/><g font-family="Liberation Sans, sans-serif" font-size="12" fill="#000080" shape-rendering="auto" text-rendering="geometricPrecision"><text transform="translate(337.4 702.8) rotate(-90)" textLength="42.4" lengthAdjust="spacingAndGlyphs">Te-129m</text><text transform="translate(351.4 275.4) rotate(-90)" textLength="36.4" lengthAdjust="spacingAndGlyphs">Am-241</text><text transform="translate(373.4 651.2) rotate(-90)" textLength="35.0" lengthAdjust="spacingAndGlyphs">???-228</text><text transform="translate(381.4 747) rotate(-90)" textLength="14.5" lengthAdjust="spacingAndGlyphs">???</text><text transform="translate(384.4 726) rotate(-90)" textLength="31.4" lengthAdjust="spacingAndGlyphs">Ba-131</text><text transform="translate(415.4 752.2) rotate(-90)" textLength="28.2" lengthAdjust="spacingAndGlyphs">U-235</text><text transform="translate(441.4 794) rotate(-90)" textLength="57.4" lengthAdjust="spacingAndGlyphs">Pb-212,-214</text><text transform="translate(469.4 724) rotate(-90)" textLength="33.3" lengthAdjust="spacingAndGlyphs">Pb-214</text><text transform="translate(498.4 708) rotate(-90)" textLength="33.3" lengthAdjust="spacingAndGlyphs">Pb-214</text><text transform="translate(577.4 807) rotate(-90)" textLength="24.0" lengthAdjust="spacingAndGlyphs">I-133</text><text transform="translate(627.4 715) rotate(-90)" textLength="31.0" lengthAdjust="spacingAndGlyphs">Bi-214</text><text transform="translate(707.4 871.6) rotate(-90)" textLength="31.0" lengthAdjust="spacingAndGlyphs">Bi-214</text><text transform="translate(883.4 818) rotate(-90)" textLength="31.0" lengthAdjust="spacingAndGlyphs">Bi-214</text><text transform="translate(942.4 877) rotate(-90)" textLength="31.0" lengthAdjust="spacingAndGlyphs">Bi-214</text><text transform="translate(1012.4 891) rotate(-90)" textLength="31.0" lengthAdjust="spacingAndGlyphs">Bi-214</text><text transform="translate(1054.4 853) rotate(-90)" textLength="22.0" lengthAdjust="spacingAndGlyphs">K-40</text><text transform="translate(1426.4 937) rotate(-90)" textLength="31.0" lengthAdjust="spacingAndGlyphs">Bi-214</text><text transform="translate(1632.4 931.6) rotate(-90)" textLength="30.6" lengthAdjust="spacingAndGlyphs">Tl-208</text><text transform="translate(1206.3 843.3) rotate(-90)" textLength="31.0" lengthAdjust="spacingAndGlyphs">Bi-214</text></g></svg><div style="position:absolute;left:1100px;top:884px;width:204px;height:86px;background:#ffff80;border-top:1px solid #e6e6e6;border-left:1px solid #e6e6e6;border-right:1px solid #6e6e6e;border-bottom:1px solid #6e6e6e;box-shadow:inset 1px 1px 0 #fff,inset -1px -1px 0 #a2a2a2;"></div><div style="position:absolute;left:1104.3px;top:887.0px;line-height:16px;font-size:12px;color:#0000cc;white-space:pre;letter-spacing:-0.588px;word-spacing:0.50px;">Bi-214 @ 1764.5 keV (15.10 %)</div><div style="position:absolute;left:1104.3px;top:902.0px;line-height:16px;font-size:12px;color:#0000cc;white-space:pre;letter-spacing:-0.523px;word-spacing:0.50px;">FWHM: 3.15 keV</div><div style="position:absolute;left:1104.3px;top:917.0px;line-height:16px;font-size:12px;color:#0000cc;white-space:pre;letter-spacing:-0.154px;word-spacing:0.50px;">Brutto: 370 Imp. +/- 5.2 %</div><div style="position:absolute;left:1104.3px;top:932.0px;line-height:16px;font-size:12px;color:#0000cc;white-space:pre;letter-spacing:-0.147px;word-spacing:0.50px;">Netto: 330 Imp. +/- 5.5 %</div><div style="position:absolute;left:1104.3px;top:947.0px;line-height:16px;font-size:12px;color:#0000cc;white-space:pre;letter-spacing:-0.191px;word-spacing:0.50px;">Netto: 1.1e-02 ips +/- 5.5 %</div></body></html>
